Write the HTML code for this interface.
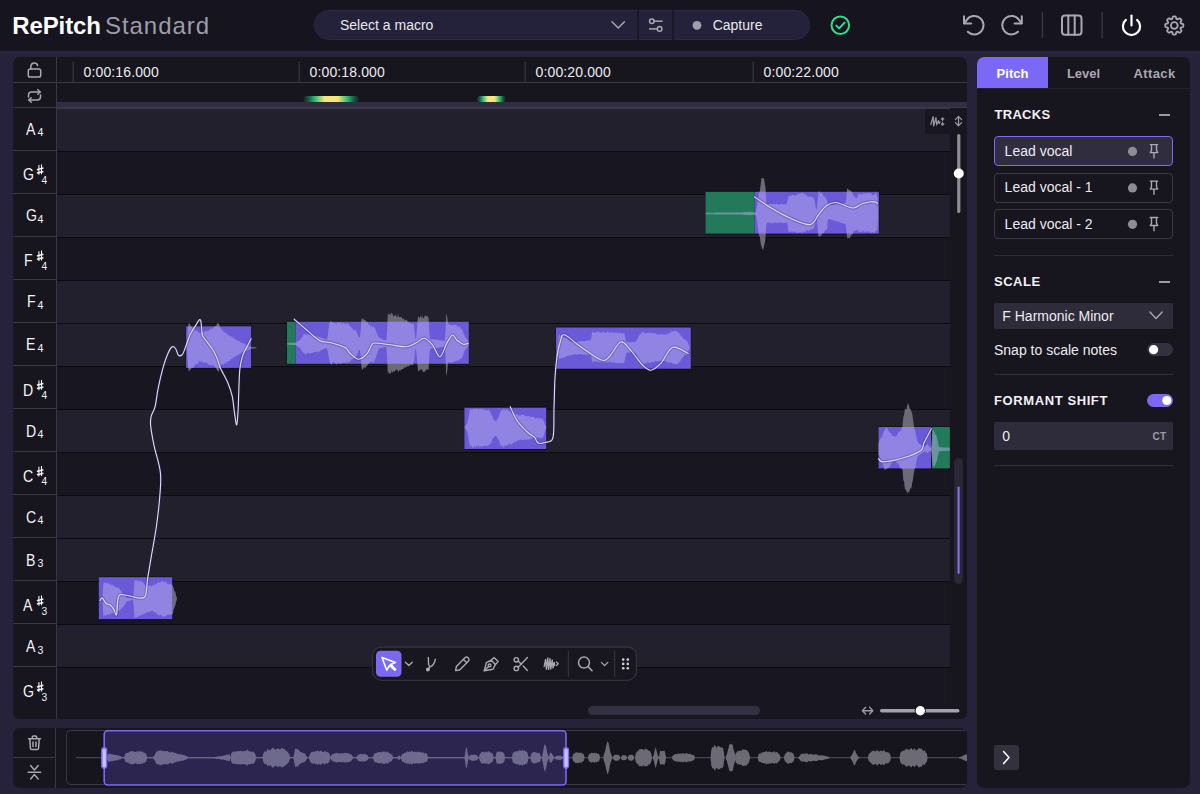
<!DOCTYPE html><html><head><meta charset="utf-8"><style>
html,body{margin:0;padding:0;}
body{width:1200px;height:794px;overflow:hidden;position:relative;background:#252239;font-family:'Liberation Sans', sans-serif;}
div{box-sizing:border-box;}
svg{position:absolute;left:0;top:0;overflow:visible;}
</style></head><body>
<div style="position:absolute;left:0px;top:0px;width:1200px;height:51px;background:#16141e;"></div>
<div style="position:absolute;left:0px;top:51px;width:1200px;height:1.5px;background:#28253d;"></div>
<div style="position:absolute;left:12.3px;top:14.20px;font-size:24px;line-height:1;font-weight:700;color:#ffffff;letter-spacing:-0.12px;white-space:nowrap;">RePitch</div>
<div style="position:absolute;left:105px;top:14.20px;font-size:24px;line-height:1;font-weight:400;color:#9e9ca6;letter-spacing:0.95px;white-space:nowrap;">Standard</div>
<div style="position:absolute;left:314px;top:10px;width:323px;height:30px;background:#24213a;border-radius:15px 0 0 15px;border:1px solid #2c2942;border-right:none;"></div>
<div style="position:absolute;left:639px;top:10px;width:33px;height:30px;background:#24213a;border-top:1px solid #2c2942;border-bottom:1px solid #2c2942;"></div>
<div style="position:absolute;left:674px;top:10px;width:136px;height:30px;background:#24213a;border-radius:0 15px 15px 0;border:1px solid #2c2942;border-left:none;"></div>
<div style="position:absolute;left:637px;top:10px;width:2px;height:30px;background:#1a1826;"></div>
<div style="position:absolute;left:672px;top:10px;width:2px;height:30px;background:#1a1826;"></div>
<div style="position:absolute;left:340px;top:17.70px;font-size:14px;line-height:1;font-weight:400;color:#e8e7ec;letter-spacing:0px;white-space:nowrap;">Select a macro</div>
<div style="position:absolute;left:712.7px;top:17.70px;font-size:14px;line-height:1;font-weight:400;color:#e8e7ec;letter-spacing:0px;white-space:nowrap;">Capture</div>
<div style="position:absolute;left:13px;top:57px;width:954px;height:662px;background:#17151e;border-radius:7px;overflow:hidden;"></div>
<div style="position:absolute;left:977px;top:57px;width:213px;height:731px;background:#17151e;border-radius:7px;"></div>
<div style="position:absolute;left:13px;top:728px;width:954px;height:60px;background:#17151e;border-radius:7px;"></div>
<svg width="1200" height="794" viewBox="0 0 1200 794"><clipPath id="mainclip"><rect x="13" y="57" width="954" height="662" rx="7"/></clipPath><g clip-path="url(#mainclip)"><rect x="57" y="102" width="910" height="5" fill="#312d42"/><rect x="57" y="107" width="910" height="2" fill="#3b3947"/><rect x="13" y="82" width="954" height="1" fill="#3a3845"/><rect x="13" y="107" width="43" height="1" fill="#3a3845"/><rect x="57" y="109.00" width="893" height="42.50" fill="#22202c"/><rect x="57" y="151.50" width="893" height="43.00" fill="#181621"/><rect x="57" y="151.00" width="893" height="1" fill="#0b0a0e"/><rect x="13" y="150" width="43" height="1" fill="#3a3845"/><rect x="57" y="194.50" width="893" height="43.00" fill="#22202c"/><rect x="57" y="194.00" width="893" height="1" fill="#0b0a0e"/><rect x="13" y="193" width="43" height="1" fill="#3a3845"/><rect x="57" y="237.50" width="893" height="43.00" fill="#181621"/><rect x="57" y="237.00" width="893" height="1" fill="#0b0a0e"/><rect x="13" y="236" width="43" height="1" fill="#3a3845"/><rect x="57" y="280.50" width="893" height="43.00" fill="#22202c"/><rect x="57" y="280.00" width="893" height="1" fill="#0b0a0e"/><rect x="13" y="279" width="43" height="1" fill="#3a3845"/><rect x="57" y="323.50" width="893" height="43.00" fill="#22202c"/><rect x="57" y="323.00" width="893" height="1" fill="#0b0a0e"/><rect x="13" y="322" width="43" height="1" fill="#3a3845"/><rect x="57" y="366.50" width="893" height="43.00" fill="#181621"/><rect x="57" y="366.00" width="893" height="1" fill="#0b0a0e"/><rect x="13" y="365" width="43" height="1" fill="#3a3845"/><rect x="57" y="409.50" width="893" height="43.00" fill="#22202c"/><rect x="57" y="409.00" width="893" height="1" fill="#0b0a0e"/><rect x="13" y="408" width="43" height="1" fill="#3a3845"/><rect x="57" y="452.50" width="893" height="43.00" fill="#181621"/><rect x="57" y="452.00" width="893" height="1" fill="#0b0a0e"/><rect x="13" y="451" width="43" height="1" fill="#3a3845"/><rect x="57" y="495.50" width="893" height="43.00" fill="#22202c"/><rect x="57" y="495.00" width="893" height="1" fill="#0b0a0e"/><rect x="13" y="494" width="43" height="1" fill="#3a3845"/><rect x="57" y="538.50" width="893" height="43.00" fill="#22202c"/><rect x="57" y="538.00" width="893" height="1" fill="#0b0a0e"/><rect x="13" y="537" width="43" height="1" fill="#3a3845"/><rect x="57" y="581.50" width="893" height="43.00" fill="#181621"/><rect x="57" y="581.00" width="893" height="1" fill="#0b0a0e"/><rect x="13" y="580" width="43" height="1" fill="#3a3845"/><rect x="57" y="624.50" width="893" height="43.00" fill="#22202c"/><rect x="57" y="624.00" width="893" height="1" fill="#0b0a0e"/><rect x="13" y="623" width="43" height="1" fill="#3a3845"/><rect x="57" y="667.50" width="893" height="51.50" fill="#181621"/><rect x="57" y="667.00" width="893" height="1" fill="#0b0a0e"/><rect x="13" y="666" width="43" height="1" fill="#3a3845"/><rect x="56" y="57" width="1" height="662" fill="#3a3845"/><rect x="950" y="108" width="17" height="611" fill="#17151e"/><rect x="72.70" y="61.5" width="1" height="21" fill="#3f3d49"/><rect x="298.70" y="61.5" width="1" height="21" fill="#3f3d49"/><rect x="524.70" y="61.5" width="1" height="21" fill="#3f3d49"/><rect x="752.70" y="61.5" width="1" height="21" fill="#3f3d49"/><defs>
<linearGradient id="mk" x1="0" x2="1" y1="0" y2="0">
<stop offset="0" stop-color="#1f6b4a" stop-opacity="0.2"/>
<stop offset="0.2" stop-color="#26b873"/>
<stop offset="0.38" stop-color="#f4e77a"/>
<stop offset="0.62" stop-color="#f4e77a"/>
<stop offset="0.8" stop-color="#26b873"/>
<stop offset="1" stop-color="#1f6b4a" stop-opacity="0.2"/>
</linearGradient>
<linearGradient id="mkv" x1="0" x2="0" y1="0" y2="1">
<stop offset="0" stop-color="#000" stop-opacity="0.35"/>
<stop offset="0.5" stop-color="#000" stop-opacity="0"/>
<stop offset="1" stop-color="#000" stop-opacity="0.35"/>
</linearGradient>
</defs><rect x="303.4" y="96" width="55.6" height="6" rx="3" fill="url(#mk)"/><rect x="476.9" y="96" width="28.7" height="6" rx="3" fill="url(#mk)"/><clipPath id="nc0"><rect x="98.8" y="577.2" width="73.40" height="41.90"/></clipPath><rect x="98.3" y="576.2" width="74.40" height="43.90" fill="#0d0b12" opacity="0.6"/><polygon points="102.5,598.8 103.3,583.9 104.1,582.5 104.9,582.9 105.7,582.5 106.5,583.8 107.3,582.5 108.1,582.9 108.9,583.8 109.7,584.5 110.5,583.5 111.3,585.4 112.1,583.9 112.9,585.5 113.7,586.1 114.5,585.9 115.3,586.7 116.1,587.2 116.9,587.6 117.7,587.3 118.5,588.1 119.3,588.2 120.1,589.9 120.9,590.5 121.7,591.7 122.5,593.2 123.3,594.4 124.1,594.9 124.9,595.8 125.7,596.6 126.5,597.4 127.3,597.9 128.1,598.0 128.9,598.0 129.7,598.1 130.5,598.1 131.3,598.2 132.1,598.2 132.9,598.3 133.7,592.7 134.5,579.4 135.3,581.0 136.1,579.9 136.9,580.8 137.7,580.7 138.5,580.8 139.3,581.0 140.1,582.2 140.9,580.1 141.7,581.7 142.5,582.1 143.3,582.4 144.1,583.2 144.9,584.9 145.7,585.7 146.5,587.0 147.3,585.8 148.1,585.9 148.9,585.6 149.7,585.6 150.5,585.9 151.3,586.6 152.1,585.5 152.9,585.2 153.7,585.2 154.5,584.5 155.3,583.9 156.1,584.7 156.9,584.1 157.7,582.3 158.5,582.1 159.3,582.9 160.1,581.6 160.9,582.7 161.7,580.7 162.5,581.8 163.3,581.0 164.1,581.9 164.9,582.3 165.7,581.5 166.5,582.8 167.3,583.9 168.1,583.5 168.9,584.5 169.7,584.0 170.5,583.6 171.3,584.7 172.1,584.4 172.9,586.1 173.7,588.5 174.5,591.2 175.3,591.8 176.1,595.5 176.9,598.3 177.3,598.8 177.3,598.8 176.9,599.3 176.1,602.3 175.3,605.5 174.5,607.2 173.7,609.2 172.9,613.1 172.1,615.3 171.3,613.7 170.5,615.3 169.7,613.9 168.9,615.5 168.1,614.3 167.3,615.1 166.5,615.6 165.7,615.9 164.9,615.8 164.1,616.7 163.3,615.9 162.5,616.9 161.7,615.6 160.9,614.7 160.1,614.5 159.3,615.7 158.5,615.2 157.7,614.7 156.9,613.8 156.1,612.7 155.3,612.7 154.5,612.6 153.7,611.7 152.9,611.5 152.1,610.6 151.3,611.6 150.5,611.2 149.7,611.6 148.9,612.3 148.1,612.7 147.3,611.5 146.5,612.7 145.7,613.0 144.9,614.3 144.1,613.3 143.3,614.3 142.5,615.6 141.7,614.3 140.9,615.5 140.1,616.1 139.3,614.9 138.5,616.0 137.7,617.3 136.9,616.8 136.1,617.7 135.3,617.7 134.5,617.7 133.7,605.5 132.9,599.8 132.1,600.0 131.3,600.2 130.5,600.4 129.7,600.7 128.9,600.9 128.1,601.1 127.3,601.3 126.5,602.1 125.7,603.2 124.9,604.3 124.1,605.7 123.3,606.6 122.5,607.8 121.7,608.3 120.9,609.5 120.1,609.8 119.3,611.0 118.5,610.3 117.7,611.2 116.9,610.6 116.1,611.7 115.3,611.6 114.5,612.4 113.7,612.2 112.9,612.9 112.1,613.1 111.3,613.7 110.5,613.0 109.7,615.2 108.9,615.0 108.1,613.8 107.3,615.1 106.5,614.5 105.7,616.4 104.9,615.5 104.1,614.9 103.3,616.1 102.5,598.8" fill="#6c6a77"/><rect x="98.8" y="577.2" width="73.40" height="41.90" fill="#6a5ad8"/><polygon points="102.5,598.8 103.3,583.9 104.1,582.5 104.9,582.9 105.7,582.5 106.5,583.8 107.3,582.5 108.1,582.9 108.9,583.8 109.7,584.5 110.5,583.5 111.3,585.4 112.1,583.9 112.9,585.5 113.7,586.1 114.5,585.9 115.3,586.7 116.1,587.2 116.9,587.6 117.7,587.3 118.5,588.1 119.3,588.2 120.1,589.9 120.9,590.5 121.7,591.7 122.5,593.2 123.3,594.4 124.1,594.9 124.9,595.8 125.7,596.6 126.5,597.4 127.3,597.9 128.1,598.0 128.9,598.0 129.7,598.1 130.5,598.1 131.3,598.2 132.1,598.2 132.9,598.3 133.7,592.7 134.5,579.4 135.3,581.0 136.1,579.9 136.9,580.8 137.7,580.7 138.5,580.8 139.3,581.0 140.1,582.2 140.9,580.1 141.7,581.7 142.5,582.1 143.3,582.4 144.1,583.2 144.9,584.9 145.7,585.7 146.5,587.0 147.3,585.8 148.1,585.9 148.9,585.6 149.7,585.6 150.5,585.9 151.3,586.6 152.1,585.5 152.9,585.2 153.7,585.2 154.5,584.5 155.3,583.9 156.1,584.7 156.9,584.1 157.7,582.3 158.5,582.1 159.3,582.9 160.1,581.6 160.9,582.7 161.7,580.7 162.5,581.8 163.3,581.0 164.1,581.9 164.9,582.3 165.7,581.5 166.5,582.8 167.3,583.9 168.1,583.5 168.9,584.5 169.7,584.0 170.5,583.6 171.3,584.7 172.1,584.4 172.9,586.1 173.7,588.5 174.5,591.2 175.3,591.8 176.1,595.5 176.9,598.3 177.3,598.8 177.3,598.8 176.9,599.3 176.1,602.3 175.3,605.5 174.5,607.2 173.7,609.2 172.9,613.1 172.1,615.3 171.3,613.7 170.5,615.3 169.7,613.9 168.9,615.5 168.1,614.3 167.3,615.1 166.5,615.6 165.7,615.9 164.9,615.8 164.1,616.7 163.3,615.9 162.5,616.9 161.7,615.6 160.9,614.7 160.1,614.5 159.3,615.7 158.5,615.2 157.7,614.7 156.9,613.8 156.1,612.7 155.3,612.7 154.5,612.6 153.7,611.7 152.9,611.5 152.1,610.6 151.3,611.6 150.5,611.2 149.7,611.6 148.9,612.3 148.1,612.7 147.3,611.5 146.5,612.7 145.7,613.0 144.9,614.3 144.1,613.3 143.3,614.3 142.5,615.6 141.7,614.3 140.9,615.5 140.1,616.1 139.3,614.9 138.5,616.0 137.7,617.3 136.9,616.8 136.1,617.7 135.3,617.7 134.5,617.7 133.7,605.5 132.9,599.8 132.1,600.0 131.3,600.2 130.5,600.4 129.7,600.7 128.9,600.9 128.1,601.1 127.3,601.3 126.5,602.1 125.7,603.2 124.9,604.3 124.1,605.7 123.3,606.6 122.5,607.8 121.7,608.3 120.9,609.5 120.1,609.8 119.3,611.0 118.5,610.3 117.7,611.2 116.9,610.6 116.1,611.7 115.3,611.6 114.5,612.4 113.7,612.2 112.9,612.9 112.1,613.1 111.3,613.7 110.5,613.0 109.7,615.2 108.9,615.0 108.1,613.8 107.3,615.1 106.5,614.5 105.7,616.4 104.9,615.5 104.1,614.9 103.3,616.1 102.5,598.8" fill="rgba(190,182,240,0.45)" clip-path="url(#nc0)"/><clipPath id="nc1"><rect x="186.1" y="326.3" width="65.00" height="41.60"/></clipPath><rect x="185.6" y="325.3" width="66.00" height="43.60" fill="#0d0b12" opacity="0.6"/><polygon points="186.8,347.8 187.6,334.4 188.4,324.0 189.2,322.7 190.0,324.4 190.8,325.9 191.6,327.0 192.4,328.0 193.2,327.7 194.0,327.7 194.8,329.5 195.6,331.0 196.4,330.5 197.2,331.2 198.0,331.4 198.8,332.5 199.6,332.9 200.4,333.0 201.2,332.5 202.0,331.8 202.8,331.9 203.6,331.7 204.4,332.3 205.2,330.8 206.0,331.0 206.8,331.4 207.6,330.9 208.4,330.5 209.2,330.5 210.0,328.8 210.8,329.2 211.6,328.5 212.4,329.3 213.2,327.7 214.0,326.8 214.8,326.4 215.6,325.9 216.4,325.4 217.2,323.3 218.0,323.2 218.8,323.7 219.6,325.6 220.4,327.5 221.2,328.9 222.0,329.8 222.8,330.5 223.6,332.0 224.4,332.7 225.2,331.7 226.0,333.5 226.8,333.6 227.6,334.8 228.4,335.1 229.2,335.7 230.0,336.3 230.8,336.8 231.6,336.1 232.4,337.5 233.2,337.8 234.0,337.5 234.8,339.2 235.6,339.1 236.4,340.1 237.2,340.7 238.0,340.5 238.8,341.0 239.6,341.5 240.4,342.2 241.2,342.5 242.0,343.2 242.8,343.1 243.6,343.6 244.4,344.0 245.2,344.2 246.0,344.7 246.8,345.1 247.6,345.4 248.4,345.8 249.2,346.2 250.0,346.5 250.8,346.9 251.6,347.0 252.4,347.1 253.2,347.1 254.0,347.2 254.8,347.2 255.6,347.3 256.4,347.3 256.4,348.3 255.6,348.3 254.8,348.4 254.0,348.4 253.2,348.5 252.4,348.5 251.6,348.6 250.8,348.7 250.0,349.1 249.2,349.4 248.4,349.8 247.6,350.2 246.8,350.5 246.0,350.8 245.2,351.1 244.4,351.4 243.6,351.9 242.8,352.1 242.0,352.6 241.2,352.9 240.4,353.2 239.6,353.9 238.8,354.5 238.0,355.0 237.2,355.3 236.4,355.7 235.6,356.7 234.8,356.7 234.0,357.0 233.2,357.4 232.4,358.8 231.6,358.5 230.8,359.2 230.0,360.4 229.2,361.4 228.4,361.4 227.6,361.4 226.8,362.6 226.0,363.4 225.2,362.7 224.4,363.8 223.6,365.0 222.8,364.2 222.0,364.3 221.2,365.0 220.4,367.5 219.6,367.6 218.8,371.9 218.0,370.7 217.2,370.7 216.4,368.8 215.6,367.6 214.8,366.2 214.0,365.7 213.2,365.1 212.4,365.1 211.6,365.1 210.8,365.7 210.0,364.2 209.2,364.7 208.4,364.2 207.6,364.0 206.8,362.8 206.0,362.9 205.2,361.6 204.4,363.0 203.6,362.5 202.8,362.5 202.0,362.1 201.2,360.8 200.4,362.1 199.6,361.2 198.8,361.6 198.0,363.3 197.2,364.6 196.4,364.0 195.6,364.0 194.8,365.2 194.0,366.5 193.2,368.3 192.4,367.4 191.6,367.4 190.8,369.4 190.0,369.4 189.2,371.5 188.4,370.3 187.6,360.4 186.8,347.8" fill="#6c6a77"/><rect x="186.1" y="326.3" width="65.00" height="41.60" fill="#6a5ad8"/><polygon points="186.8,347.8 187.6,334.4 188.4,324.0 189.2,322.7 190.0,324.4 190.8,325.9 191.6,327.0 192.4,328.0 193.2,327.7 194.0,327.7 194.8,329.5 195.6,331.0 196.4,330.5 197.2,331.2 198.0,331.4 198.8,332.5 199.6,332.9 200.4,333.0 201.2,332.5 202.0,331.8 202.8,331.9 203.6,331.7 204.4,332.3 205.2,330.8 206.0,331.0 206.8,331.4 207.6,330.9 208.4,330.5 209.2,330.5 210.0,328.8 210.8,329.2 211.6,328.5 212.4,329.3 213.2,327.7 214.0,326.8 214.8,326.4 215.6,325.9 216.4,325.4 217.2,323.3 218.0,323.2 218.8,323.7 219.6,325.6 220.4,327.5 221.2,328.9 222.0,329.8 222.8,330.5 223.6,332.0 224.4,332.7 225.2,331.7 226.0,333.5 226.8,333.6 227.6,334.8 228.4,335.1 229.2,335.7 230.0,336.3 230.8,336.8 231.6,336.1 232.4,337.5 233.2,337.8 234.0,337.5 234.8,339.2 235.6,339.1 236.4,340.1 237.2,340.7 238.0,340.5 238.8,341.0 239.6,341.5 240.4,342.2 241.2,342.5 242.0,343.2 242.8,343.1 243.6,343.6 244.4,344.0 245.2,344.2 246.0,344.7 246.8,345.1 247.6,345.4 248.4,345.8 249.2,346.2 250.0,346.5 250.8,346.9 251.6,347.0 252.4,347.1 253.2,347.1 254.0,347.2 254.8,347.2 255.6,347.3 256.4,347.3 256.4,348.3 255.6,348.3 254.8,348.4 254.0,348.4 253.2,348.5 252.4,348.5 251.6,348.6 250.8,348.7 250.0,349.1 249.2,349.4 248.4,349.8 247.6,350.2 246.8,350.5 246.0,350.8 245.2,351.1 244.4,351.4 243.6,351.9 242.8,352.1 242.0,352.6 241.2,352.9 240.4,353.2 239.6,353.9 238.8,354.5 238.0,355.0 237.2,355.3 236.4,355.7 235.6,356.7 234.8,356.7 234.0,357.0 233.2,357.4 232.4,358.8 231.6,358.5 230.8,359.2 230.0,360.4 229.2,361.4 228.4,361.4 227.6,361.4 226.8,362.6 226.0,363.4 225.2,362.7 224.4,363.8 223.6,365.0 222.8,364.2 222.0,364.3 221.2,365.0 220.4,367.5 219.6,367.6 218.8,371.9 218.0,370.7 217.2,370.7 216.4,368.8 215.6,367.6 214.8,366.2 214.0,365.7 213.2,365.1 212.4,365.1 211.6,365.1 210.8,365.7 210.0,364.2 209.2,364.7 208.4,364.2 207.6,364.0 206.8,362.8 206.0,362.9 205.2,361.6 204.4,363.0 203.6,362.5 202.8,362.5 202.0,362.1 201.2,360.8 200.4,362.1 199.6,361.2 198.8,361.6 198.0,363.3 197.2,364.6 196.4,364.0 195.6,364.0 194.8,365.2 194.0,366.5 193.2,368.3 192.4,367.4 191.6,367.4 190.8,369.4 190.0,369.4 189.2,371.5 188.4,370.3 187.6,360.4 186.8,347.8" fill="rgba(190,182,240,0.45)" clip-path="url(#nc1)"/><clipPath id="nc2"><rect x="287" y="321.7" width="8.80" height="42.10"/><rect x="295.8" y="321.7" width="173.00" height="42.10"/></clipPath><rect x="286.5" y="320.7" width="9.80" height="44.10" fill="#0d0b12" opacity="0.6"/><rect x="295.3" y="320.7" width="174.00" height="44.10" fill="#0d0b12" opacity="0.6"/><polygon points="287.0,343.3 287.8,343.1 288.6,342.9 289.4,342.8 290.2,342.8 291.0,342.7 291.8,342.7 292.6,342.7 293.4,342.7 294.2,342.6 295.0,342.6 295.8,342.6 296.6,342.0 297.4,341.4 298.2,340.9 299.0,340.8 299.8,340.1 300.6,339.0 301.4,338.3 302.2,337.0 303.0,335.1 303.8,334.4 304.6,334.1 305.4,334.2 306.2,334.4 307.0,334.4 307.8,334.5 308.6,335.1 309.4,334.6 310.2,335.0 311.0,335.1 311.8,335.6 312.6,335.7 313.4,335.4 314.2,336.3 315.0,335.6 315.8,336.1 316.6,336.4 317.4,336.7 318.2,336.6 319.0,336.8 319.8,337.0 320.6,337.4 321.4,337.6 322.2,337.9 323.0,338.3 323.8,338.6 324.6,339.2 325.4,339.2 326.2,339.9 327.0,339.5 327.8,335.5 328.6,328.3 329.4,323.4 330.2,321.5 331.0,321.1 331.8,322.3 332.6,322.9 333.4,322.1 334.2,323.4 335.0,322.3 335.8,323.9 336.6,323.2 337.4,321.7 338.2,323.0 339.0,322.5 339.8,322.8 340.6,321.9 341.4,323.3 342.2,323.9 343.0,322.0 343.8,323.2 344.6,323.6 345.4,324.8 346.2,323.2 347.0,323.3 347.8,323.5 348.6,324.0 349.4,326.4 350.2,325.7 351.0,327.6 351.8,327.8 352.6,329.1 353.4,329.8 354.2,330.4 355.0,329.7 355.8,330.6 356.6,332.4 357.4,333.4 358.2,336.0 359.0,336.9 359.8,338.0 360.6,331.9 361.4,319.2 362.2,319.3 363.0,317.7 363.8,320.3 364.6,319.9 365.4,319.8 366.2,322.4 367.0,321.5 367.8,322.4 368.6,325.0 369.4,324.1 370.2,326.0 371.0,326.4 371.8,325.7 372.6,328.1 373.4,326.2 374.2,327.8 375.0,328.0 375.8,330.2 376.6,332.4 377.4,334.8 378.2,336.6 379.0,337.6 379.8,338.1 380.6,338.3 381.4,338.6 382.2,338.9 383.0,339.8 383.8,340.0 384.6,340.0 385.4,340.4 386.2,340.6 387.0,332.7 387.8,313.9 388.6,314.5 389.4,314.0 390.2,315.5 391.0,312.8 391.8,313.3 392.6,314.2 393.4,316.6 394.2,315.9 395.0,315.4 395.8,314.2 396.6,317.1 397.4,316.9 398.2,313.9 399.0,317.4 399.8,316.9 400.6,317.1 401.4,316.7 402.2,318.6 403.0,319.3 403.8,317.9 404.6,320.6 405.4,320.2 406.2,319.5 407.0,320.1 407.8,321.7 408.6,322.0 409.4,322.7 410.2,323.0 411.0,323.1 411.8,324.6 412.6,323.8 413.4,322.5 414.2,327.6 415.0,336.2 415.8,340.1 416.6,333.9 417.4,322.4 418.2,315.5 419.0,317.7 419.8,318.2 420.6,315.5 421.4,318.0 422.2,315.2 423.0,318.4 423.8,318.1 424.6,316.2 425.4,315.3 426.2,315.9 427.0,316.1 427.8,316.4 428.6,318.2 429.4,333.3 430.2,338.9 431.0,339.2 431.8,339.3 432.6,339.1 433.4,339.4 434.2,339.5 435.0,339.8 435.8,339.4 436.6,339.6 437.4,339.7 438.2,339.9 439.0,340.1 439.8,340.0 440.6,340.5 441.4,340.2 442.2,340.5 443.0,340.7 443.8,340.8 444.6,340.9 445.4,334.2 446.2,313.6 447.0,315.8 447.8,321.6 448.6,324.4 449.4,324.0 450.2,325.0 451.0,324.9 451.8,325.5 452.6,324.9 453.4,325.2 454.2,324.6 455.0,325.6 455.8,325.0 456.6,325.5 457.4,326.4 458.2,327.1 459.0,326.4 459.8,326.2 460.6,328.0 461.4,329.0 462.2,329.3 463.0,332.2 463.8,334.1 464.6,335.5 465.4,337.6 466.2,338.4 467.0,338.9 467.8,340.7 468.6,342.0 469.0,342.8 469.0,344.8 468.6,345.4 467.8,346.5 467.0,347.9 466.2,348.3 465.4,349.6 464.6,350.5 463.8,352.7 463.0,355.3 462.2,357.4 461.4,358.7 460.6,358.8 459.8,359.1 459.0,360.8 458.2,360.6 457.4,359.7 456.6,361.6 455.8,360.6 455.0,361.5 454.2,361.4 453.4,362.3 452.6,362.0 451.8,363.2 451.0,362.9 450.2,362.1 449.4,362.4 448.6,361.7 447.8,364.3 447.0,373.2 446.2,375.7 445.4,353.8 444.6,346.7 443.8,346.9 443.0,346.9 442.2,347.2 441.4,347.2 440.6,347.4 439.8,347.3 439.0,347.6 438.2,347.7 437.4,347.9 436.6,347.7 435.8,347.9 435.0,348.1 434.2,348.1 433.4,348.2 432.6,348.3 431.8,348.6 431.0,348.4 430.2,348.9 429.4,354.7 428.6,370.0 427.8,369.1 427.0,370.5 426.2,368.9 425.4,370.9 424.6,371.9 423.8,372.0 423.0,372.0 422.2,369.7 421.4,369.5 420.6,369.4 419.8,369.8 419.0,371.4 418.2,371.3 417.4,364.7 416.6,353.9 415.8,347.9 415.0,351.7 414.2,360.1 413.4,364.1 412.6,365.6 411.8,364.4 411.0,365.4 410.2,364.4 409.4,366.0 408.6,366.4 407.8,365.8 407.0,367.0 406.2,366.7 405.4,367.9 404.6,367.0 403.8,368.2 403.0,369.2 402.2,368.9 401.4,369.4 400.6,370.8 399.8,369.9 399.0,370.8 398.2,372.3 397.4,369.6 396.6,369.9 395.8,369.5 395.0,371.4 394.2,371.7 393.4,370.9 392.6,373.3 391.8,370.2 391.0,373.4 390.2,373.5 389.4,373.7 388.6,371.5 387.8,373.9 387.0,355.5 386.2,346.8 385.4,347.2 384.6,347.2 383.8,347.3 383.0,347.7 382.2,347.8 381.4,348.1 380.6,348.2 379.8,348.0 379.0,348.9 378.2,350.2 377.4,352.4 376.6,355.0 375.8,357.8 375.0,358.7 374.2,361.7 373.4,362.5 372.6,362.4 371.8,360.9 371.0,361.9 370.2,362.5 369.4,362.9 368.6,363.7 367.8,364.6 367.0,366.3 366.2,366.0 365.4,368.5 364.6,367.2 363.8,367.5 363.0,369.0 362.2,369.9 361.4,366.7 360.6,355.2 359.8,349.6 359.0,350.2 358.2,352.1 357.4,353.8 356.6,355.6 355.8,357.9 355.0,357.2 354.2,358.0 353.4,358.7 352.6,358.7 351.8,359.3 351.0,360.3 350.2,362.2 349.4,360.7 348.6,362.9 347.8,362.4 347.0,362.9 346.2,361.9 345.4,363.3 344.6,363.3 343.8,361.8 343.0,363.2 342.2,362.6 341.4,363.7 340.6,363.2 339.8,363.5 339.0,363.5 338.2,363.3 337.4,363.0 336.6,364.5 335.8,364.3 335.0,362.5 334.2,363.1 333.4,362.2 332.6,362.3 331.8,364.7 331.0,364.7 330.2,363.1 329.4,361.0 328.6,356.6 327.8,352.1 327.0,347.9 326.2,348.1 325.4,348.6 324.6,348.4 323.8,349.1 323.0,349.2 322.2,349.8 321.4,350.5 320.6,350.2 319.8,351.3 319.0,351.6 318.2,351.9 317.4,351.7 316.6,351.7 315.8,351.7 315.0,352.0 314.2,351.9 313.4,351.9 312.6,353.0 311.8,353.0 311.0,353.3 310.2,353.4 309.4,353.1 308.6,352.7 307.8,353.5 307.0,353.0 306.2,354.0 305.4,354.4 304.6,353.4 303.8,353.3 303.0,352.4 302.2,351.0 301.4,350.2 300.6,348.4 299.8,347.7 299.0,347.0 298.2,346.7 297.4,346.2 296.6,345.6 295.8,345.0 295.0,345.0 294.2,345.0 293.4,344.9 292.6,344.9 291.8,344.9 291.0,344.9 290.2,344.8 289.4,344.8 288.6,344.7 287.8,344.5 287.0,344.3" fill="#6c6a77"/><rect x="287" y="321.7" width="8.80" height="42.10" fill="#237a5b"/><rect x="295.8" y="321.7" width="173.00" height="42.10" fill="#6a5ad8"/><polygon points="287.0,343.3 287.8,343.1 288.6,342.9 289.4,342.8 290.2,342.8 291.0,342.7 291.8,342.7 292.6,342.7 293.4,342.7 294.2,342.6 295.0,342.6 295.8,342.6 296.6,342.0 297.4,341.4 298.2,340.9 299.0,340.8 299.8,340.1 300.6,339.0 301.4,338.3 302.2,337.0 303.0,335.1 303.8,334.4 304.6,334.1 305.4,334.2 306.2,334.4 307.0,334.4 307.8,334.5 308.6,335.1 309.4,334.6 310.2,335.0 311.0,335.1 311.8,335.6 312.6,335.7 313.4,335.4 314.2,336.3 315.0,335.6 315.8,336.1 316.6,336.4 317.4,336.7 318.2,336.6 319.0,336.8 319.8,337.0 320.6,337.4 321.4,337.6 322.2,337.9 323.0,338.3 323.8,338.6 324.6,339.2 325.4,339.2 326.2,339.9 327.0,339.5 327.8,335.5 328.6,328.3 329.4,323.4 330.2,321.5 331.0,321.1 331.8,322.3 332.6,322.9 333.4,322.1 334.2,323.4 335.0,322.3 335.8,323.9 336.6,323.2 337.4,321.7 338.2,323.0 339.0,322.5 339.8,322.8 340.6,321.9 341.4,323.3 342.2,323.9 343.0,322.0 343.8,323.2 344.6,323.6 345.4,324.8 346.2,323.2 347.0,323.3 347.8,323.5 348.6,324.0 349.4,326.4 350.2,325.7 351.0,327.6 351.8,327.8 352.6,329.1 353.4,329.8 354.2,330.4 355.0,329.7 355.8,330.6 356.6,332.4 357.4,333.4 358.2,336.0 359.0,336.9 359.8,338.0 360.6,331.9 361.4,319.2 362.2,319.3 363.0,317.7 363.8,320.3 364.6,319.9 365.4,319.8 366.2,322.4 367.0,321.5 367.8,322.4 368.6,325.0 369.4,324.1 370.2,326.0 371.0,326.4 371.8,325.7 372.6,328.1 373.4,326.2 374.2,327.8 375.0,328.0 375.8,330.2 376.6,332.4 377.4,334.8 378.2,336.6 379.0,337.6 379.8,338.1 380.6,338.3 381.4,338.6 382.2,338.9 383.0,339.8 383.8,340.0 384.6,340.0 385.4,340.4 386.2,340.6 387.0,332.7 387.8,313.9 388.6,314.5 389.4,314.0 390.2,315.5 391.0,312.8 391.8,313.3 392.6,314.2 393.4,316.6 394.2,315.9 395.0,315.4 395.8,314.2 396.6,317.1 397.4,316.9 398.2,313.9 399.0,317.4 399.8,316.9 400.6,317.1 401.4,316.7 402.2,318.6 403.0,319.3 403.8,317.9 404.6,320.6 405.4,320.2 406.2,319.5 407.0,320.1 407.8,321.7 408.6,322.0 409.4,322.7 410.2,323.0 411.0,323.1 411.8,324.6 412.6,323.8 413.4,322.5 414.2,327.6 415.0,336.2 415.8,340.1 416.6,333.9 417.4,322.4 418.2,315.5 419.0,317.7 419.8,318.2 420.6,315.5 421.4,318.0 422.2,315.2 423.0,318.4 423.8,318.1 424.6,316.2 425.4,315.3 426.2,315.9 427.0,316.1 427.8,316.4 428.6,318.2 429.4,333.3 430.2,338.9 431.0,339.2 431.8,339.3 432.6,339.1 433.4,339.4 434.2,339.5 435.0,339.8 435.8,339.4 436.6,339.6 437.4,339.7 438.2,339.9 439.0,340.1 439.8,340.0 440.6,340.5 441.4,340.2 442.2,340.5 443.0,340.7 443.8,340.8 444.6,340.9 445.4,334.2 446.2,313.6 447.0,315.8 447.8,321.6 448.6,324.4 449.4,324.0 450.2,325.0 451.0,324.9 451.8,325.5 452.6,324.9 453.4,325.2 454.2,324.6 455.0,325.6 455.8,325.0 456.6,325.5 457.4,326.4 458.2,327.1 459.0,326.4 459.8,326.2 460.6,328.0 461.4,329.0 462.2,329.3 463.0,332.2 463.8,334.1 464.6,335.5 465.4,337.6 466.2,338.4 467.0,338.9 467.8,340.7 468.6,342.0 469.0,342.8 469.0,344.8 468.6,345.4 467.8,346.5 467.0,347.9 466.2,348.3 465.4,349.6 464.6,350.5 463.8,352.7 463.0,355.3 462.2,357.4 461.4,358.7 460.6,358.8 459.8,359.1 459.0,360.8 458.2,360.6 457.4,359.7 456.6,361.6 455.8,360.6 455.0,361.5 454.2,361.4 453.4,362.3 452.6,362.0 451.8,363.2 451.0,362.9 450.2,362.1 449.4,362.4 448.6,361.7 447.8,364.3 447.0,373.2 446.2,375.7 445.4,353.8 444.6,346.7 443.8,346.9 443.0,346.9 442.2,347.2 441.4,347.2 440.6,347.4 439.8,347.3 439.0,347.6 438.2,347.7 437.4,347.9 436.6,347.7 435.8,347.9 435.0,348.1 434.2,348.1 433.4,348.2 432.6,348.3 431.8,348.6 431.0,348.4 430.2,348.9 429.4,354.7 428.6,370.0 427.8,369.1 427.0,370.5 426.2,368.9 425.4,370.9 424.6,371.9 423.8,372.0 423.0,372.0 422.2,369.7 421.4,369.5 420.6,369.4 419.8,369.8 419.0,371.4 418.2,371.3 417.4,364.7 416.6,353.9 415.8,347.9 415.0,351.7 414.2,360.1 413.4,364.1 412.6,365.6 411.8,364.4 411.0,365.4 410.2,364.4 409.4,366.0 408.6,366.4 407.8,365.8 407.0,367.0 406.2,366.7 405.4,367.9 404.6,367.0 403.8,368.2 403.0,369.2 402.2,368.9 401.4,369.4 400.6,370.8 399.8,369.9 399.0,370.8 398.2,372.3 397.4,369.6 396.6,369.9 395.8,369.5 395.0,371.4 394.2,371.7 393.4,370.9 392.6,373.3 391.8,370.2 391.0,373.4 390.2,373.5 389.4,373.7 388.6,371.5 387.8,373.9 387.0,355.5 386.2,346.8 385.4,347.2 384.6,347.2 383.8,347.3 383.0,347.7 382.2,347.8 381.4,348.1 380.6,348.2 379.8,348.0 379.0,348.9 378.2,350.2 377.4,352.4 376.6,355.0 375.8,357.8 375.0,358.7 374.2,361.7 373.4,362.5 372.6,362.4 371.8,360.9 371.0,361.9 370.2,362.5 369.4,362.9 368.6,363.7 367.8,364.6 367.0,366.3 366.2,366.0 365.4,368.5 364.6,367.2 363.8,367.5 363.0,369.0 362.2,369.9 361.4,366.7 360.6,355.2 359.8,349.6 359.0,350.2 358.2,352.1 357.4,353.8 356.6,355.6 355.8,357.9 355.0,357.2 354.2,358.0 353.4,358.7 352.6,358.7 351.8,359.3 351.0,360.3 350.2,362.2 349.4,360.7 348.6,362.9 347.8,362.4 347.0,362.9 346.2,361.9 345.4,363.3 344.6,363.3 343.8,361.8 343.0,363.2 342.2,362.6 341.4,363.7 340.6,363.2 339.8,363.5 339.0,363.5 338.2,363.3 337.4,363.0 336.6,364.5 335.8,364.3 335.0,362.5 334.2,363.1 333.4,362.2 332.6,362.3 331.8,364.7 331.0,364.7 330.2,363.1 329.4,361.0 328.6,356.6 327.8,352.1 327.0,347.9 326.2,348.1 325.4,348.6 324.6,348.4 323.8,349.1 323.0,349.2 322.2,349.8 321.4,350.5 320.6,350.2 319.8,351.3 319.0,351.6 318.2,351.9 317.4,351.7 316.6,351.7 315.8,351.7 315.0,352.0 314.2,351.9 313.4,351.9 312.6,353.0 311.8,353.0 311.0,353.3 310.2,353.4 309.4,353.1 308.6,352.7 307.8,353.5 307.0,353.0 306.2,354.0 305.4,354.4 304.6,353.4 303.8,353.3 303.0,352.4 302.2,351.0 301.4,350.2 300.6,348.4 299.8,347.7 299.0,347.0 298.2,346.7 297.4,346.2 296.6,345.6 295.8,345.0 295.0,345.0 294.2,345.0 293.4,344.9 292.6,344.9 291.8,344.9 291.0,344.9 290.2,344.8 289.4,344.8 288.6,344.7 287.8,344.5 287.0,344.3" fill="rgba(190,182,240,0.45)" clip-path="url(#nc2)"/><clipPath id="nc3"><rect x="464.4" y="407.7" width="81.85" height="41.30"/></clipPath><rect x="463.9" y="406.7" width="82.85" height="43.30" fill="#0d0b12" opacity="0.6"/><polygon points="464.6,427.5 465.4,426.2 466.2,425.0 467.0,424.0 467.8,420.9 468.6,417.1 469.4,411.4 470.2,408.8 471.0,409.0 471.8,409.9 472.6,409.8 473.4,408.4 474.2,408.5 475.0,409.7 475.8,408.8 476.6,408.5 477.4,409.2 478.2,409.5 479.0,409.6 479.8,408.5 480.6,409.5 481.4,408.7 482.2,408.8 483.0,409.7 483.8,409.6 484.6,410.6 485.4,409.2 486.2,411.0 487.0,410.5 487.8,410.1 488.6,409.0 489.4,410.9 490.2,411.7 491.0,413.8 491.8,415.6 492.6,416.6 493.4,419.4 494.2,420.0 495.0,421.3 495.8,421.6 496.6,421.1 497.4,419.0 498.2,417.5 499.0,416.6 499.8,413.0 500.6,412.1 501.4,410.1 502.2,409.8 503.0,409.2 503.8,409.4 504.6,409.6 505.4,410.4 506.2,408.9 507.0,410.3 507.8,409.0 508.6,411.0 509.4,411.7 510.2,410.7 511.0,412.4 511.8,412.4 512.6,413.0 513.4,412.1 514.2,412.1 515.0,413.9 515.8,414.6 516.6,414.5 517.4,413.8 518.2,415.4 519.0,415.3 519.8,415.5 520.6,415.7 521.4,414.5 522.2,414.5 523.0,414.8 523.8,415.1 524.6,415.8 525.4,416.4 526.2,415.5 527.0,416.5 527.8,416.0 528.6,416.1 529.4,416.5 530.2,417.2 531.0,416.4 531.8,416.6 532.6,417.1 533.4,417.0 534.2,417.1 535.0,418.4 535.8,417.8 536.6,417.8 537.4,418.7 538.2,418.0 539.0,418.2 539.8,418.4 540.6,418.5 541.4,418.7 542.2,419.1 543.0,419.2 543.8,421.2 544.6,423.7 545.4,425.6 546.2,427.2 546.7,427.5 546.7,427.5 546.2,427.9 545.4,429.9 544.6,432.3 543.8,435.4 543.0,437.7 542.2,437.5 541.4,437.4 540.6,438.0 539.8,438.4 539.0,437.6 538.2,437.5 537.4,437.5 536.6,438.9 535.8,438.5 535.0,438.0 534.2,438.8 533.4,438.1 532.6,438.1 531.8,439.5 531.0,438.2 530.2,439.6 529.4,439.3 528.6,439.2 527.8,439.4 527.0,439.5 526.2,440.0 525.4,440.0 524.6,438.9 523.8,440.0 523.0,439.9 522.2,439.6 521.4,439.9 520.6,439.2 519.8,440.6 519.0,439.7 518.2,440.0 517.4,440.8 516.6,441.8 515.8,441.3 515.0,441.7 514.2,442.3 513.4,442.6 512.6,443.3 511.8,444.8 511.0,444.1 510.2,443.8 509.4,444.3 508.6,444.4 507.8,445.6 507.0,445.1 506.2,446.1 505.4,445.8 504.6,445.6 503.8,448.1 503.0,446.1 502.2,445.9 501.4,446.5 500.6,445.3 499.8,443.2 499.0,440.4 498.2,439.7 497.4,438.0 496.6,436.5 495.8,435.7 495.0,435.7 494.2,436.8 493.4,437.5 492.6,438.8 491.8,441.2 491.0,443.3 490.2,443.7 489.4,444.6 488.6,445.2 487.8,445.6 487.0,446.1 486.2,446.4 485.4,445.0 484.6,445.7 483.8,446.1 483.0,446.1 482.2,447.2 481.4,446.6 480.6,445.9 479.8,447.4 479.0,445.5 478.2,445.7 477.4,447.0 476.6,445.6 475.8,447.6 475.0,447.1 474.2,446.0 473.4,447.6 472.6,448.0 471.8,445.9 471.0,446.4 470.2,445.9 469.4,444.2 468.6,438.9 467.8,434.1 467.0,430.9 466.2,430.0 465.4,428.8 464.6,427.5" fill="#6c6a77"/><rect x="464.4" y="407.7" width="81.85" height="41.30" fill="#6a5ad8"/><polygon points="464.6,427.5 465.4,426.2 466.2,425.0 467.0,424.0 467.8,420.9 468.6,417.1 469.4,411.4 470.2,408.8 471.0,409.0 471.8,409.9 472.6,409.8 473.4,408.4 474.2,408.5 475.0,409.7 475.8,408.8 476.6,408.5 477.4,409.2 478.2,409.5 479.0,409.6 479.8,408.5 480.6,409.5 481.4,408.7 482.2,408.8 483.0,409.7 483.8,409.6 484.6,410.6 485.4,409.2 486.2,411.0 487.0,410.5 487.8,410.1 488.6,409.0 489.4,410.9 490.2,411.7 491.0,413.8 491.8,415.6 492.6,416.6 493.4,419.4 494.2,420.0 495.0,421.3 495.8,421.6 496.6,421.1 497.4,419.0 498.2,417.5 499.0,416.6 499.8,413.0 500.6,412.1 501.4,410.1 502.2,409.8 503.0,409.2 503.8,409.4 504.6,409.6 505.4,410.4 506.2,408.9 507.0,410.3 507.8,409.0 508.6,411.0 509.4,411.7 510.2,410.7 511.0,412.4 511.8,412.4 512.6,413.0 513.4,412.1 514.2,412.1 515.0,413.9 515.8,414.6 516.6,414.5 517.4,413.8 518.2,415.4 519.0,415.3 519.8,415.5 520.6,415.7 521.4,414.5 522.2,414.5 523.0,414.8 523.8,415.1 524.6,415.8 525.4,416.4 526.2,415.5 527.0,416.5 527.8,416.0 528.6,416.1 529.4,416.5 530.2,417.2 531.0,416.4 531.8,416.6 532.6,417.1 533.4,417.0 534.2,417.1 535.0,418.4 535.8,417.8 536.6,417.8 537.4,418.7 538.2,418.0 539.0,418.2 539.8,418.4 540.6,418.5 541.4,418.7 542.2,419.1 543.0,419.2 543.8,421.2 544.6,423.7 545.4,425.6 546.2,427.2 546.7,427.5 546.7,427.5 546.2,427.9 545.4,429.9 544.6,432.3 543.8,435.4 543.0,437.7 542.2,437.5 541.4,437.4 540.6,438.0 539.8,438.4 539.0,437.6 538.2,437.5 537.4,437.5 536.6,438.9 535.8,438.5 535.0,438.0 534.2,438.8 533.4,438.1 532.6,438.1 531.8,439.5 531.0,438.2 530.2,439.6 529.4,439.3 528.6,439.2 527.8,439.4 527.0,439.5 526.2,440.0 525.4,440.0 524.6,438.9 523.8,440.0 523.0,439.9 522.2,439.6 521.4,439.9 520.6,439.2 519.8,440.6 519.0,439.7 518.2,440.0 517.4,440.8 516.6,441.8 515.8,441.3 515.0,441.7 514.2,442.3 513.4,442.6 512.6,443.3 511.8,444.8 511.0,444.1 510.2,443.8 509.4,444.3 508.6,444.4 507.8,445.6 507.0,445.1 506.2,446.1 505.4,445.8 504.6,445.6 503.8,448.1 503.0,446.1 502.2,445.9 501.4,446.5 500.6,445.3 499.8,443.2 499.0,440.4 498.2,439.7 497.4,438.0 496.6,436.5 495.8,435.7 495.0,435.7 494.2,436.8 493.4,437.5 492.6,438.8 491.8,441.2 491.0,443.3 490.2,443.7 489.4,444.6 488.6,445.2 487.8,445.6 487.0,446.1 486.2,446.4 485.4,445.0 484.6,445.7 483.8,446.1 483.0,446.1 482.2,447.2 481.4,446.6 480.6,445.9 479.8,447.4 479.0,445.5 478.2,445.7 477.4,447.0 476.6,445.6 475.8,447.6 475.0,447.1 474.2,446.0 473.4,447.6 472.6,448.0 471.8,445.9 471.0,446.4 470.2,445.9 469.4,444.2 468.6,438.9 467.8,434.1 467.0,430.9 466.2,430.0 465.4,428.8 464.6,427.5" fill="rgba(190,182,240,0.45)" clip-path="url(#nc3)"/><clipPath id="nc4"><rect x="556" y="327.5" width="134.80" height="41.25"/></clipPath><rect x="555.5" y="326.5" width="135.80" height="43.25" fill="#0d0b12" opacity="0.6"/><polygon points="557.0,347.3 557.8,343.5 558.6,336.8 559.4,334.6 560.2,335.8 561.0,334.6 561.8,335.0 562.6,336.0 563.4,336.4 564.2,337.6 565.0,337.8 565.8,337.8 566.6,338.3 567.4,339.1 568.2,340.3 569.0,340.6 569.8,340.5 570.6,341.5 571.4,341.6 572.2,342.2 573.0,342.0 573.8,341.9 574.6,342.2 575.4,342.2 576.2,342.0 577.0,342.1 577.8,341.8 578.6,341.3 579.4,341.6 580.2,341.2 581.0,340.9 581.8,341.0 582.6,341.5 583.4,341.1 584.2,341.3 585.0,341.1 585.8,340.9 586.6,340.2 587.4,340.6 588.2,340.4 589.0,340.6 589.8,339.9 590.6,340.4 591.4,336.9 592.2,332.2 593.0,332.3 593.8,331.9 594.6,332.4 595.4,332.9 596.2,331.7 597.0,332.8 597.8,331.1 598.6,332.3 599.4,332.0 600.2,332.3 601.0,333.1 601.8,333.2 602.6,331.6 603.4,331.8 604.2,332.0 605.0,333.1 605.8,333.0 606.6,332.8 607.4,331.4 608.2,331.5 609.0,332.5 609.8,332.5 610.6,332.7 611.4,332.8 612.2,331.7 613.0,332.6 613.8,333.4 614.6,332.1 615.4,332.9 616.2,332.2 617.0,332.4 617.8,333.0 618.6,333.2 619.4,332.3 620.2,333.2 621.0,332.5 621.8,333.8 622.6,333.4 623.4,333.0 624.2,333.2 625.0,336.4 625.8,339.5 626.6,342.2 627.4,342.1 628.2,342.0 629.0,342.3 629.8,342.5 630.6,342.0 631.4,342.1 632.2,342.1 633.0,342.0 633.8,342.1 634.6,342.0 635.4,341.5 636.2,341.1 637.0,339.5 637.8,338.4 638.6,336.4 639.4,335.2 640.2,334.6 641.0,333.2 641.8,332.8 642.6,332.0 643.4,331.8 644.2,332.7 645.0,333.3 645.8,332.9 646.6,333.3 647.4,332.9 648.2,332.6 649.0,332.8 649.8,332.9 650.6,332.5 651.4,332.7 652.2,333.6 653.0,333.3 653.8,332.8 654.6,333.5 655.4,333.1 656.2,334.6 657.0,333.9 657.8,334.0 658.6,334.5 659.4,334.9 660.2,333.7 661.0,333.9 661.8,334.6 662.6,334.1 663.4,335.1 664.2,333.9 665.0,334.8 665.8,334.8 666.6,334.0 667.4,333.1 668.2,334.3 669.0,333.5 669.8,332.3 670.6,333.0 671.4,331.3 672.2,331.8 673.0,331.5 673.8,331.0 674.6,330.7 675.4,330.9 676.2,331.3 677.0,331.3 677.8,331.2 678.6,333.4 679.4,333.5 680.2,333.7 681.0,336.2 681.8,336.6 682.6,337.2 683.4,338.4 684.2,339.3 685.0,339.4 685.8,340.3 686.6,340.7 687.4,341.3 688.2,343.5 689.0,345.4 689.8,346.9 690.4,347.3 690.4,347.3 689.8,347.7 689.0,349.2 688.2,351.4 687.4,353.1 686.6,354.7 685.8,354.9 685.0,354.6 684.2,355.4 683.4,356.9 682.6,357.5 681.8,358.6 681.0,360.1 680.2,360.9 679.4,362.7 678.6,362.4 677.8,363.9 677.0,364.0 676.2,364.8 675.4,364.2 674.6,363.9 673.8,363.2 673.0,364.0 672.2,363.5 671.4,362.8 670.6,362.3 669.8,362.2 669.0,363.4 668.2,362.3 667.4,362.6 666.6,361.3 665.8,361.7 665.0,361.1 664.2,360.9 663.4,360.3 662.6,360.7 661.8,360.4 661.0,361.7 660.2,360.8 659.4,360.8 658.6,361.2 657.8,362.2 657.0,360.9 656.2,361.8 655.4,360.8 654.6,361.6 653.8,362.9 653.0,362.3 652.2,361.6 651.4,362.7 650.6,362.4 649.8,363.6 649.0,362.4 648.2,362.1 647.4,362.0 646.6,363.8 645.8,363.1 645.0,363.2 644.2,364.4 643.4,363.8 642.6,363.5 641.8,362.5 641.0,362.1 640.2,360.9 639.4,359.7 638.6,357.9 637.8,357.2 637.0,355.6 636.2,353.8 635.4,353.2 634.6,352.7 633.8,352.4 633.0,352.4 632.2,352.1 631.4,352.5 630.6,352.3 629.8,352.5 629.0,352.3 628.2,352.6 627.4,352.4 626.6,352.7 625.8,355.5 625.0,359.3 624.2,362.7 623.4,363.3 622.6,363.0 621.8,362.7 621.0,362.7 620.2,363.5 619.4,362.9 618.6,362.5 617.8,362.9 617.0,363.0 616.2,362.8 615.4,363.0 614.6,363.1 613.8,361.9 613.0,362.0 612.2,362.6 611.4,363.2 610.6,361.6 609.8,361.8 609.0,362.7 608.2,362.1 607.4,362.8 606.6,362.0 605.8,362.8 605.0,361.9 604.2,362.6 603.4,362.9 602.6,361.3 601.8,362.0 601.0,362.8 600.2,361.8 599.4,362.5 598.6,361.4 597.8,361.9 597.0,361.0 596.2,362.7 595.4,361.1 594.6,361.1 593.8,361.4 593.0,362.5 592.2,362.1 591.4,357.6 590.6,355.1 589.8,354.8 589.0,354.7 588.2,354.8 587.4,354.4 586.6,354.9 585.8,354.7 585.0,354.9 584.2,354.1 583.4,354.6 582.6,354.8 581.8,354.8 581.0,354.0 580.2,354.1 579.4,354.5 578.6,354.5 577.8,354.3 577.0,354.7 576.2,354.6 575.4,354.1 574.6,354.2 573.8,354.3 573.0,355.0 572.2,355.0 571.4,355.0 570.6,355.5 569.8,355.6 569.0,355.2 568.2,356.3 567.4,355.7 566.6,356.1 565.8,356.4 565.0,357.7 564.2,357.1 563.4,357.9 562.6,357.7 561.8,357.7 561.0,358.7 560.2,358.5 559.4,359.3 558.6,357.1 557.8,350.8 557.0,347.3" fill="#6c6a77"/><rect x="556" y="327.5" width="134.80" height="41.25" fill="#6a5ad8"/><polygon points="557.0,347.3 557.8,343.5 558.6,336.8 559.4,334.6 560.2,335.8 561.0,334.6 561.8,335.0 562.6,336.0 563.4,336.4 564.2,337.6 565.0,337.8 565.8,337.8 566.6,338.3 567.4,339.1 568.2,340.3 569.0,340.6 569.8,340.5 570.6,341.5 571.4,341.6 572.2,342.2 573.0,342.0 573.8,341.9 574.6,342.2 575.4,342.2 576.2,342.0 577.0,342.1 577.8,341.8 578.6,341.3 579.4,341.6 580.2,341.2 581.0,340.9 581.8,341.0 582.6,341.5 583.4,341.1 584.2,341.3 585.0,341.1 585.8,340.9 586.6,340.2 587.4,340.6 588.2,340.4 589.0,340.6 589.8,339.9 590.6,340.4 591.4,336.9 592.2,332.2 593.0,332.3 593.8,331.9 594.6,332.4 595.4,332.9 596.2,331.7 597.0,332.8 597.8,331.1 598.6,332.3 599.4,332.0 600.2,332.3 601.0,333.1 601.8,333.2 602.6,331.6 603.4,331.8 604.2,332.0 605.0,333.1 605.8,333.0 606.6,332.8 607.4,331.4 608.2,331.5 609.0,332.5 609.8,332.5 610.6,332.7 611.4,332.8 612.2,331.7 613.0,332.6 613.8,333.4 614.6,332.1 615.4,332.9 616.2,332.2 617.0,332.4 617.8,333.0 618.6,333.2 619.4,332.3 620.2,333.2 621.0,332.5 621.8,333.8 622.6,333.4 623.4,333.0 624.2,333.2 625.0,336.4 625.8,339.5 626.6,342.2 627.4,342.1 628.2,342.0 629.0,342.3 629.8,342.5 630.6,342.0 631.4,342.1 632.2,342.1 633.0,342.0 633.8,342.1 634.6,342.0 635.4,341.5 636.2,341.1 637.0,339.5 637.8,338.4 638.6,336.4 639.4,335.2 640.2,334.6 641.0,333.2 641.8,332.8 642.6,332.0 643.4,331.8 644.2,332.7 645.0,333.3 645.8,332.9 646.6,333.3 647.4,332.9 648.2,332.6 649.0,332.8 649.8,332.9 650.6,332.5 651.4,332.7 652.2,333.6 653.0,333.3 653.8,332.8 654.6,333.5 655.4,333.1 656.2,334.6 657.0,333.9 657.8,334.0 658.6,334.5 659.4,334.9 660.2,333.7 661.0,333.9 661.8,334.6 662.6,334.1 663.4,335.1 664.2,333.9 665.0,334.8 665.8,334.8 666.6,334.0 667.4,333.1 668.2,334.3 669.0,333.5 669.8,332.3 670.6,333.0 671.4,331.3 672.2,331.8 673.0,331.5 673.8,331.0 674.6,330.7 675.4,330.9 676.2,331.3 677.0,331.3 677.8,331.2 678.6,333.4 679.4,333.5 680.2,333.7 681.0,336.2 681.8,336.6 682.6,337.2 683.4,338.4 684.2,339.3 685.0,339.4 685.8,340.3 686.6,340.7 687.4,341.3 688.2,343.5 689.0,345.4 689.8,346.9 690.4,347.3 690.4,347.3 689.8,347.7 689.0,349.2 688.2,351.4 687.4,353.1 686.6,354.7 685.8,354.9 685.0,354.6 684.2,355.4 683.4,356.9 682.6,357.5 681.8,358.6 681.0,360.1 680.2,360.9 679.4,362.7 678.6,362.4 677.8,363.9 677.0,364.0 676.2,364.8 675.4,364.2 674.6,363.9 673.8,363.2 673.0,364.0 672.2,363.5 671.4,362.8 670.6,362.3 669.8,362.2 669.0,363.4 668.2,362.3 667.4,362.6 666.6,361.3 665.8,361.7 665.0,361.1 664.2,360.9 663.4,360.3 662.6,360.7 661.8,360.4 661.0,361.7 660.2,360.8 659.4,360.8 658.6,361.2 657.8,362.2 657.0,360.9 656.2,361.8 655.4,360.8 654.6,361.6 653.8,362.9 653.0,362.3 652.2,361.6 651.4,362.7 650.6,362.4 649.8,363.6 649.0,362.4 648.2,362.1 647.4,362.0 646.6,363.8 645.8,363.1 645.0,363.2 644.2,364.4 643.4,363.8 642.6,363.5 641.8,362.5 641.0,362.1 640.2,360.9 639.4,359.7 638.6,357.9 637.8,357.2 637.0,355.6 636.2,353.8 635.4,353.2 634.6,352.7 633.8,352.4 633.0,352.4 632.2,352.1 631.4,352.5 630.6,352.3 629.8,352.5 629.0,352.3 628.2,352.6 627.4,352.4 626.6,352.7 625.8,355.5 625.0,359.3 624.2,362.7 623.4,363.3 622.6,363.0 621.8,362.7 621.0,362.7 620.2,363.5 619.4,362.9 618.6,362.5 617.8,362.9 617.0,363.0 616.2,362.8 615.4,363.0 614.6,363.1 613.8,361.9 613.0,362.0 612.2,362.6 611.4,363.2 610.6,361.6 609.8,361.8 609.0,362.7 608.2,362.1 607.4,362.8 606.6,362.0 605.8,362.8 605.0,361.9 604.2,362.6 603.4,362.9 602.6,361.3 601.8,362.0 601.0,362.8 600.2,361.8 599.4,362.5 598.6,361.4 597.8,361.9 597.0,361.0 596.2,362.7 595.4,361.1 594.6,361.1 593.8,361.4 593.0,362.5 592.2,362.1 591.4,357.6 590.6,355.1 589.8,354.8 589.0,354.7 588.2,354.8 587.4,354.4 586.6,354.9 585.8,354.7 585.0,354.9 584.2,354.1 583.4,354.6 582.6,354.8 581.8,354.8 581.0,354.0 580.2,354.1 579.4,354.5 578.6,354.5 577.8,354.3 577.0,354.7 576.2,354.6 575.4,354.1 574.6,354.2 573.8,354.3 573.0,355.0 572.2,355.0 571.4,355.0 570.6,355.5 569.8,355.6 569.0,355.2 568.2,356.3 567.4,355.7 566.6,356.1 565.8,356.4 565.0,357.7 564.2,357.1 563.4,357.9 562.6,357.7 561.8,357.7 561.0,358.7 560.2,358.5 559.4,359.3 558.6,357.1 557.8,350.8 557.0,347.3" fill="rgba(190,182,240,0.45)" clip-path="url(#nc4)"/><clipPath id="nc5"><rect x="705.5" y="191.8" width="49.10" height="41.80"/><rect x="754.6" y="191.8" width="124.30" height="41.80"/></clipPath><rect x="705.0" y="190.8" width="50.10" height="43.80" fill="#0d0b12" opacity="0.6"/><rect x="754.1" y="190.8" width="125.30" height="43.80" fill="#0d0b12" opacity="0.6"/><polygon points="705.5,213.0 706.3,212.7 707.1,212.7 707.9,212.7 708.7,212.7 709.5,212.7 710.3,212.7 711.1,212.7 711.9,212.7 712.7,212.7 713.5,212.7 714.3,212.7 715.1,212.6 715.9,212.6 716.7,212.6 717.5,212.6 718.3,212.6 719.1,212.6 719.9,212.6 720.7,212.6 721.5,212.6 722.3,212.6 723.1,212.6 723.9,212.6 724.7,212.6 725.5,212.6 726.3,212.6 727.1,212.6 727.9,212.6 728.7,212.6 729.5,212.6 730.3,212.6 731.1,212.6 731.9,212.5 732.7,212.5 733.5,212.5 734.3,212.5 735.1,212.5 735.9,212.5 736.7,212.5 737.5,212.5 738.3,212.5 739.1,212.5 739.9,212.5 740.7,212.4 741.5,212.4 742.3,212.3 743.1,212.3 743.9,212.2 744.7,212.1 745.5,212.1 746.3,212.0 747.1,211.9 747.9,211.9 748.7,211.8 749.5,211.7 750.3,211.7 751.1,211.9 751.9,212.0 752.7,212.1 753.5,212.3 754.3,212.4 755.1,212.6 755.9,211.8 756.7,207.5 757.5,201.9 758.3,197.3 759.1,192.5 759.9,190.9 760.7,184.4 761.5,178.0 762.3,178.0 763.1,178.7 763.9,177.8 764.7,183.2 765.5,187.2 766.3,203.5 767.1,203.8 767.9,204.6 768.7,204.0 769.5,203.6 770.3,204.5 771.1,204.3 771.9,203.6 772.7,204.0 773.5,203.8 774.3,204.7 775.1,204.0 775.9,204.0 776.7,203.7 777.5,204.6 778.3,204.4 779.1,204.2 779.9,204.5 780.7,203.9 781.5,203.8 782.3,204.3 783.1,204.0 783.9,204.3 784.7,204.6 785.5,204.7 786.3,203.8 787.1,203.5 787.9,199.0 788.7,196.0 789.5,196.3 790.3,195.3 791.1,195.8 791.9,195.8 792.7,194.8 793.5,195.2 794.3,195.8 795.1,195.7 795.9,194.9 796.7,194.5 797.5,194.8 798.3,193.0 799.1,194.4 799.9,193.6 800.7,193.7 801.5,192.5 802.3,193.2 803.1,192.8 803.9,193.9 804.7,194.7 805.5,194.0 806.3,195.6 807.1,195.5 807.9,196.8 808.7,196.9 809.5,196.6 810.3,195.8 811.1,197.5 811.9,196.9 812.7,196.9 813.5,197.8 814.3,199.3 815.1,203.9 815.9,209.1 816.7,209.6 817.5,202.0 818.3,192.5 819.1,190.5 819.9,192.4 820.7,193.3 821.5,192.0 822.3,193.2 823.1,194.9 823.9,197.3 824.7,196.6 825.5,197.7 826.3,199.1 827.1,200.7 827.9,204.5 828.7,205.2 829.5,205.1 830.3,204.9 831.1,204.8 831.9,205.5 832.7,204.8 833.5,205.3 834.3,204.8 835.1,203.9 835.9,203.8 836.7,204.4 837.5,203.8 838.3,203.9 839.1,203.8 839.9,204.2 840.7,204.2 841.5,203.9 842.3,203.7 843.1,203.3 843.9,203.4 844.7,202.3 845.5,203.2 846.3,198.2 847.1,187.8 847.9,189.7 848.7,189.5 849.5,190.2 850.3,190.6 851.1,191.1 851.9,192.0 852.7,193.4 853.5,195.7 854.3,196.1 855.1,197.5 855.9,197.8 856.7,198.0 857.5,196.7 858.3,193.3 859.1,193.8 859.9,194.5 860.7,193.4 861.5,194.8 862.3,195.0 863.1,192.8 863.9,192.9 864.7,193.5 865.5,193.6 866.3,194.1 867.1,193.1 867.9,193.3 868.7,193.8 869.5,193.2 870.3,192.7 871.1,193.5 871.9,195.0 872.7,195.2 873.5,195.0 874.3,195.2 875.1,192.8 875.9,193.1 876.7,194.9 877.5,198.0 878.1,213.5 878.1,213.5 877.5,228.3 876.7,231.0 875.9,231.1 875.1,232.0 874.3,233.1 873.5,233.2 872.7,231.7 871.9,232.2 871.1,232.6 870.3,232.4 869.5,232.5 868.7,231.3 867.9,231.1 867.1,232.5 866.3,231.0 865.5,231.2 864.7,232.2 863.9,232.3 863.1,230.5 862.3,230.7 861.5,231.9 860.7,232.4 859.9,231.4 859.1,232.5 858.3,230.8 857.5,230.7 856.7,229.6 855.9,230.5 855.1,231.1 854.3,230.2 853.5,232.4 852.7,234.4 851.9,233.9 851.1,235.7 850.3,236.8 849.5,238.7 848.7,237.7 847.9,237.7 847.1,238.5 846.3,229.4 845.5,224.0 844.7,223.9 843.9,223.9 843.1,223.2 842.3,223.4 841.5,222.8 840.7,222.8 839.9,222.6 839.1,221.8 838.3,222.0 837.5,221.4 836.7,221.1 835.9,221.5 835.1,221.3 834.3,220.4 833.5,220.3 832.7,220.3 831.9,220.3 831.1,219.4 830.3,219.5 829.5,219.2 828.7,218.8 827.9,219.9 827.1,228.5 826.3,230.4 825.5,230.1 824.7,230.7 823.9,232.7 823.1,233.3 822.3,233.3 821.5,235.5 820.7,235.5 819.9,236.7 819.1,236.7 818.3,235.7 817.5,225.9 816.7,217.2 815.9,217.6 815.1,223.3 814.3,227.5 813.5,228.4 812.7,229.4 811.9,228.9 811.1,230.3 810.3,228.7 809.5,230.9 808.7,230.7 807.9,231.2 807.1,229.8 806.3,230.0 805.5,232.5 804.7,231.7 803.9,231.6 803.1,232.0 802.3,233.8 801.5,232.5 800.7,232.4 799.9,231.9 799.1,232.7 798.3,232.9 797.5,232.3 796.7,233.5 795.9,231.7 795.1,232.4 794.3,231.0 793.5,232.7 792.7,231.4 791.9,230.8 791.1,232.2 790.3,231.7 789.5,232.3 788.7,232.3 787.9,228.2 787.1,222.6 786.3,222.7 785.5,222.8 784.7,223.5 783.9,222.7 783.1,222.6 782.3,223.4 781.5,222.3 780.7,222.3 779.9,223.3 779.1,222.4 778.3,222.5 777.5,223.1 776.7,222.9 775.9,222.4 775.1,222.6 774.3,222.7 773.5,223.4 772.7,223.1 771.9,222.9 771.1,223.4 770.3,223.0 769.5,223.0 768.7,222.6 767.9,222.5 767.1,222.8 766.3,224.4 765.5,238.1 764.7,243.3 763.9,246.8 763.1,249.9 762.3,249.1 761.5,246.6 760.7,244.0 759.9,237.2 759.1,235.3 758.3,231.2 757.5,224.7 756.7,219.5 755.9,215.2 755.1,214.4 754.3,214.6 753.5,214.7 752.7,214.9 751.9,215.0 751.1,215.1 750.3,215.3 749.5,215.3 748.7,215.2 747.9,215.1 747.1,215.1 746.3,215.0 745.5,214.9 744.7,214.9 743.9,214.8 743.1,214.7 742.3,214.7 741.5,214.6 740.7,214.6 739.9,214.5 739.1,214.5 738.3,214.5 737.5,214.5 736.7,214.5 735.9,214.5 735.1,214.5 734.3,214.5 733.5,214.5 732.7,214.5 731.9,214.5 731.1,214.4 730.3,214.4 729.5,214.4 728.7,214.4 727.9,214.4 727.1,214.4 726.3,214.4 725.5,214.4 724.7,214.4 723.9,214.4 723.1,214.4 722.3,214.4 721.5,214.4 720.7,214.4 719.9,214.4 719.1,214.4 718.3,214.4 717.5,214.4 716.7,214.4 715.9,214.4 715.1,214.4 714.3,214.3 713.5,214.3 712.7,214.3 711.9,214.3 711.1,214.3 710.3,214.3 709.5,214.3 708.7,214.3 707.9,214.3 707.1,214.3 706.3,214.3 705.5,214.0" fill="#6c6a77"/><rect x="705.5" y="191.8" width="49.10" height="41.80" fill="#237a5b"/><rect x="754.6" y="191.8" width="124.30" height="41.80" fill="#6a5ad8"/><polygon points="705.5,213.0 706.3,212.7 707.1,212.7 707.9,212.7 708.7,212.7 709.5,212.7 710.3,212.7 711.1,212.7 711.9,212.7 712.7,212.7 713.5,212.7 714.3,212.7 715.1,212.6 715.9,212.6 716.7,212.6 717.5,212.6 718.3,212.6 719.1,212.6 719.9,212.6 720.7,212.6 721.5,212.6 722.3,212.6 723.1,212.6 723.9,212.6 724.7,212.6 725.5,212.6 726.3,212.6 727.1,212.6 727.9,212.6 728.7,212.6 729.5,212.6 730.3,212.6 731.1,212.6 731.9,212.5 732.7,212.5 733.5,212.5 734.3,212.5 735.1,212.5 735.9,212.5 736.7,212.5 737.5,212.5 738.3,212.5 739.1,212.5 739.9,212.5 740.7,212.4 741.5,212.4 742.3,212.3 743.1,212.3 743.9,212.2 744.7,212.1 745.5,212.1 746.3,212.0 747.1,211.9 747.9,211.9 748.7,211.8 749.5,211.7 750.3,211.7 751.1,211.9 751.9,212.0 752.7,212.1 753.5,212.3 754.3,212.4 755.1,212.6 755.9,211.8 756.7,207.5 757.5,201.9 758.3,197.3 759.1,192.5 759.9,190.9 760.7,184.4 761.5,178.0 762.3,178.0 763.1,178.7 763.9,177.8 764.7,183.2 765.5,187.2 766.3,203.5 767.1,203.8 767.9,204.6 768.7,204.0 769.5,203.6 770.3,204.5 771.1,204.3 771.9,203.6 772.7,204.0 773.5,203.8 774.3,204.7 775.1,204.0 775.9,204.0 776.7,203.7 777.5,204.6 778.3,204.4 779.1,204.2 779.9,204.5 780.7,203.9 781.5,203.8 782.3,204.3 783.1,204.0 783.9,204.3 784.7,204.6 785.5,204.7 786.3,203.8 787.1,203.5 787.9,199.0 788.7,196.0 789.5,196.3 790.3,195.3 791.1,195.8 791.9,195.8 792.7,194.8 793.5,195.2 794.3,195.8 795.1,195.7 795.9,194.9 796.7,194.5 797.5,194.8 798.3,193.0 799.1,194.4 799.9,193.6 800.7,193.7 801.5,192.5 802.3,193.2 803.1,192.8 803.9,193.9 804.7,194.7 805.5,194.0 806.3,195.6 807.1,195.5 807.9,196.8 808.7,196.9 809.5,196.6 810.3,195.8 811.1,197.5 811.9,196.9 812.7,196.9 813.5,197.8 814.3,199.3 815.1,203.9 815.9,209.1 816.7,209.6 817.5,202.0 818.3,192.5 819.1,190.5 819.9,192.4 820.7,193.3 821.5,192.0 822.3,193.2 823.1,194.9 823.9,197.3 824.7,196.6 825.5,197.7 826.3,199.1 827.1,200.7 827.9,204.5 828.7,205.2 829.5,205.1 830.3,204.9 831.1,204.8 831.9,205.5 832.7,204.8 833.5,205.3 834.3,204.8 835.1,203.9 835.9,203.8 836.7,204.4 837.5,203.8 838.3,203.9 839.1,203.8 839.9,204.2 840.7,204.2 841.5,203.9 842.3,203.7 843.1,203.3 843.9,203.4 844.7,202.3 845.5,203.2 846.3,198.2 847.1,187.8 847.9,189.7 848.7,189.5 849.5,190.2 850.3,190.6 851.1,191.1 851.9,192.0 852.7,193.4 853.5,195.7 854.3,196.1 855.1,197.5 855.9,197.8 856.7,198.0 857.5,196.7 858.3,193.3 859.1,193.8 859.9,194.5 860.7,193.4 861.5,194.8 862.3,195.0 863.1,192.8 863.9,192.9 864.7,193.5 865.5,193.6 866.3,194.1 867.1,193.1 867.9,193.3 868.7,193.8 869.5,193.2 870.3,192.7 871.1,193.5 871.9,195.0 872.7,195.2 873.5,195.0 874.3,195.2 875.1,192.8 875.9,193.1 876.7,194.9 877.5,198.0 878.1,213.5 878.1,213.5 877.5,228.3 876.7,231.0 875.9,231.1 875.1,232.0 874.3,233.1 873.5,233.2 872.7,231.7 871.9,232.2 871.1,232.6 870.3,232.4 869.5,232.5 868.7,231.3 867.9,231.1 867.1,232.5 866.3,231.0 865.5,231.2 864.7,232.2 863.9,232.3 863.1,230.5 862.3,230.7 861.5,231.9 860.7,232.4 859.9,231.4 859.1,232.5 858.3,230.8 857.5,230.7 856.7,229.6 855.9,230.5 855.1,231.1 854.3,230.2 853.5,232.4 852.7,234.4 851.9,233.9 851.1,235.7 850.3,236.8 849.5,238.7 848.7,237.7 847.9,237.7 847.1,238.5 846.3,229.4 845.5,224.0 844.7,223.9 843.9,223.9 843.1,223.2 842.3,223.4 841.5,222.8 840.7,222.8 839.9,222.6 839.1,221.8 838.3,222.0 837.5,221.4 836.7,221.1 835.9,221.5 835.1,221.3 834.3,220.4 833.5,220.3 832.7,220.3 831.9,220.3 831.1,219.4 830.3,219.5 829.5,219.2 828.7,218.8 827.9,219.9 827.1,228.5 826.3,230.4 825.5,230.1 824.7,230.7 823.9,232.7 823.1,233.3 822.3,233.3 821.5,235.5 820.7,235.5 819.9,236.7 819.1,236.7 818.3,235.7 817.5,225.9 816.7,217.2 815.9,217.6 815.1,223.3 814.3,227.5 813.5,228.4 812.7,229.4 811.9,228.9 811.1,230.3 810.3,228.7 809.5,230.9 808.7,230.7 807.9,231.2 807.1,229.8 806.3,230.0 805.5,232.5 804.7,231.7 803.9,231.6 803.1,232.0 802.3,233.8 801.5,232.5 800.7,232.4 799.9,231.9 799.1,232.7 798.3,232.9 797.5,232.3 796.7,233.5 795.9,231.7 795.1,232.4 794.3,231.0 793.5,232.7 792.7,231.4 791.9,230.8 791.1,232.2 790.3,231.7 789.5,232.3 788.7,232.3 787.9,228.2 787.1,222.6 786.3,222.7 785.5,222.8 784.7,223.5 783.9,222.7 783.1,222.6 782.3,223.4 781.5,222.3 780.7,222.3 779.9,223.3 779.1,222.4 778.3,222.5 777.5,223.1 776.7,222.9 775.9,222.4 775.1,222.6 774.3,222.7 773.5,223.4 772.7,223.1 771.9,222.9 771.1,223.4 770.3,223.0 769.5,223.0 768.7,222.6 767.9,222.5 767.1,222.8 766.3,224.4 765.5,238.1 764.7,243.3 763.9,246.8 763.1,249.9 762.3,249.1 761.5,246.6 760.7,244.0 759.9,237.2 759.1,235.3 758.3,231.2 757.5,224.7 756.7,219.5 755.9,215.2 755.1,214.4 754.3,214.6 753.5,214.7 752.7,214.9 751.9,215.0 751.1,215.1 750.3,215.3 749.5,215.3 748.7,215.2 747.9,215.1 747.1,215.1 746.3,215.0 745.5,214.9 744.7,214.9 743.9,214.8 743.1,214.7 742.3,214.7 741.5,214.6 740.7,214.6 739.9,214.5 739.1,214.5 738.3,214.5 737.5,214.5 736.7,214.5 735.9,214.5 735.1,214.5 734.3,214.5 733.5,214.5 732.7,214.5 731.9,214.5 731.1,214.4 730.3,214.4 729.5,214.4 728.7,214.4 727.9,214.4 727.1,214.4 726.3,214.4 725.5,214.4 724.7,214.4 723.9,214.4 723.1,214.4 722.3,214.4 721.5,214.4 720.7,214.4 719.9,214.4 719.1,214.4 718.3,214.4 717.5,214.4 716.7,214.4 715.9,214.4 715.1,214.4 714.3,214.3 713.5,214.3 712.7,214.3 711.9,214.3 711.1,214.3 710.3,214.3 709.5,214.3 708.7,214.3 707.9,214.3 707.1,214.3 706.3,214.3 705.5,214.0" fill="rgba(190,182,240,0.45)" clip-path="url(#nc5)"/><clipPath id="nc6"><rect x="878.5" y="427" width="52.60" height="41.40"/><rect x="932" y="427" width="17.90" height="41.40"/></clipPath><rect x="878.0" y="426" width="53.60" height="43.40" fill="#0d0b12" opacity="0.6"/><rect x="931.5" y="426" width="18.90" height="43.40" fill="#0d0b12" opacity="0.6"/><polygon points="878.5,444.4 879.3,440.7 880.1,438.6 880.9,438.5 881.7,437.1 882.5,435.2 883.3,432.5 884.1,431.4 884.9,428.8 885.7,428.3 886.5,427.4 887.3,428.1 888.1,430.7 888.9,431.1 889.7,432.4 890.5,432.4 891.3,433.7 892.1,435.6 892.9,435.3 893.7,436.6 894.5,436.7 895.3,436.2 896.1,436.6 896.9,435.3 897.7,433.7 898.5,431.8 899.3,431.7 900.1,431.2 900.9,430.5 901.7,428.0 902.5,426.5 903.3,417.1 904.1,415.0 904.9,408.8 905.7,408.7 906.5,409.7 907.3,405.3 908.1,403.0 908.9,405.6 909.7,408.8 910.5,409.1 911.3,410.9 912.1,413.5 912.9,418.3 913.7,424.3 914.5,429.6 915.3,430.8 916.1,435.6 916.9,439.4 917.7,441.7 918.5,443.2 919.3,443.7 920.1,443.9 920.9,444.9 921.7,445.2 922.5,445.4 923.3,446.2 924.1,446.7 924.9,447.1 925.7,446.0 926.5,444.9 927.3,443.9 928.1,444.9 928.9,446.1 929.7,446.9 930.5,447.9 931.3,445.9 932.1,438.3 932.9,430.7 933.7,430.1 934.5,431.9 935.3,434.7 936.1,434.7 936.9,437.6 937.7,441.5 938.5,445.2 939.3,447.2 940.1,447.2 940.9,447.3 941.7,447.3 942.5,447.4 943.3,447.4 944.1,447.4 944.9,447.5 945.7,447.5 946.5,447.5 947.3,447.6 948.1,447.6 948.9,447.7 949.7,447.7 949.9,447.7 949.9,450.7 949.7,450.7 948.9,450.7 948.1,450.8 947.3,450.8 946.5,450.9 945.7,450.9 944.9,450.9 944.1,451.0 943.3,451.0 942.5,451.0 941.7,451.1 940.9,451.1 940.1,451.2 939.3,451.2 938.5,453.2 937.7,456.7 936.9,461.0 936.1,462.8 935.3,465.0 934.5,465.9 933.7,466.9 932.9,465.3 932.1,459.1 931.3,452.2 930.5,450.4 929.7,451.1 928.9,451.8 928.1,452.5 927.3,453.2 926.5,452.6 925.7,451.7 924.9,451.3 924.1,451.7 923.3,452.2 922.5,452.8 921.7,453.3 920.9,453.8 920.1,454.2 919.3,454.9 918.5,455.3 917.7,456.0 916.9,459.7 916.1,463.1 915.3,467.7 914.5,469.7 913.7,474.2 912.9,480.0 912.1,483.6 911.3,489.3 910.5,487.3 909.7,490.5 908.9,493.1 908.1,491.0 907.3,493.9 906.5,491.1 905.7,489.7 904.9,489.1 904.1,481.8 903.3,479.9 902.5,469.2 901.7,468.7 900.9,468.4 900.1,467.0 899.3,466.4 898.5,463.8 897.7,462.9 896.9,462.9 896.1,461.5 895.3,461.3 894.5,460.7 893.7,461.5 892.9,462.0 892.1,462.5 891.3,463.2 890.5,465.0 889.7,466.6 888.9,468.3 888.1,467.5 887.3,468.7 886.5,468.5 885.7,469.6 884.9,470.4 884.1,467.0 883.3,466.3 882.5,462.5 881.7,461.0 880.9,459.4 880.1,458.3 879.3,456.3 878.5,453.9" fill="#6c6a77"/><rect x="878.5" y="427" width="52.60" height="41.40" fill="#6a5ad8"/><rect x="932" y="427" width="17.90" height="41.40" fill="#237a5b"/><polygon points="878.5,444.4 879.3,440.7 880.1,438.6 880.9,438.5 881.7,437.1 882.5,435.2 883.3,432.5 884.1,431.4 884.9,428.8 885.7,428.3 886.5,427.4 887.3,428.1 888.1,430.7 888.9,431.1 889.7,432.4 890.5,432.4 891.3,433.7 892.1,435.6 892.9,435.3 893.7,436.6 894.5,436.7 895.3,436.2 896.1,436.6 896.9,435.3 897.7,433.7 898.5,431.8 899.3,431.7 900.1,431.2 900.9,430.5 901.7,428.0 902.5,426.5 903.3,417.1 904.1,415.0 904.9,408.8 905.7,408.7 906.5,409.7 907.3,405.3 908.1,403.0 908.9,405.6 909.7,408.8 910.5,409.1 911.3,410.9 912.1,413.5 912.9,418.3 913.7,424.3 914.5,429.6 915.3,430.8 916.1,435.6 916.9,439.4 917.7,441.7 918.5,443.2 919.3,443.7 920.1,443.9 920.9,444.9 921.7,445.2 922.5,445.4 923.3,446.2 924.1,446.7 924.9,447.1 925.7,446.0 926.5,444.9 927.3,443.9 928.1,444.9 928.9,446.1 929.7,446.9 930.5,447.9 931.3,445.9 932.1,438.3 932.9,430.7 933.7,430.1 934.5,431.9 935.3,434.7 936.1,434.7 936.9,437.6 937.7,441.5 938.5,445.2 939.3,447.2 940.1,447.2 940.9,447.3 941.7,447.3 942.5,447.4 943.3,447.4 944.1,447.4 944.9,447.5 945.7,447.5 946.5,447.5 947.3,447.6 948.1,447.6 948.9,447.7 949.7,447.7 949.9,447.7 949.9,450.7 949.7,450.7 948.9,450.7 948.1,450.8 947.3,450.8 946.5,450.9 945.7,450.9 944.9,450.9 944.1,451.0 943.3,451.0 942.5,451.0 941.7,451.1 940.9,451.1 940.1,451.2 939.3,451.2 938.5,453.2 937.7,456.7 936.9,461.0 936.1,462.8 935.3,465.0 934.5,465.9 933.7,466.9 932.9,465.3 932.1,459.1 931.3,452.2 930.5,450.4 929.7,451.1 928.9,451.8 928.1,452.5 927.3,453.2 926.5,452.6 925.7,451.7 924.9,451.3 924.1,451.7 923.3,452.2 922.5,452.8 921.7,453.3 920.9,453.8 920.1,454.2 919.3,454.9 918.5,455.3 917.7,456.0 916.9,459.7 916.1,463.1 915.3,467.7 914.5,469.7 913.7,474.2 912.9,480.0 912.1,483.6 911.3,489.3 910.5,487.3 909.7,490.5 908.9,493.1 908.1,491.0 907.3,493.9 906.5,491.1 905.7,489.7 904.9,489.1 904.1,481.8 903.3,479.9 902.5,469.2 901.7,468.7 900.9,468.4 900.1,467.0 899.3,466.4 898.5,463.8 897.7,462.9 896.9,462.9 896.1,461.5 895.3,461.3 894.5,460.7 893.7,461.5 892.9,462.0 892.1,462.5 891.3,463.2 890.5,465.0 889.7,466.6 888.9,468.3 888.1,467.5 887.3,468.7 886.5,468.5 885.7,469.6 884.9,470.4 884.1,467.0 883.3,466.3 882.5,462.5 881.7,461.0 880.9,459.4 880.1,458.3 879.3,456.3 878.5,453.9" fill="rgba(190,182,240,0.45)" clip-path="url(#nc6)"/><path d="M100.10,600.60 C100.47,600.15 101.27,597.38 102.30,597.90 C103.33,598.42 104.97,602.52 106.30,603.70 C107.63,604.88 109.05,604.05 110.30,605.00 C111.55,605.95 112.77,607.78 113.80,609.40 C114.83,611.02 115.83,616.32 116.50,614.70 C117.17,613.08 117.22,603.02 117.80,599.70 C118.38,596.38 118.47,595.53 120.00,594.80 C121.53,594.07 123.92,594.77 127.00,595.30 C130.08,595.83 135.55,597.72 138.50,598.00 C141.45,598.28 143.38,598.18 144.70,597.00 C146.02,595.82 145.88,594.13 146.40,590.90 C146.92,587.67 146.92,583.72 147.80,577.60 C148.68,571.48 150.28,562.63 151.70,554.20 C153.12,545.77 154.97,536.45 156.30,527.00 C157.63,517.55 159.02,506.57 159.70,497.50 C160.38,488.43 161.35,481.28 160.40,472.60 C159.45,463.92 155.63,453.33 154.00,445.40 C152.37,437.47 151.05,429.93 150.60,425.00 C150.15,420.07 150.55,418.85 151.30,415.80 C152.05,412.75 153.97,411.23 155.10,406.70 C156.23,402.17 156.83,394.90 158.10,388.60 C159.37,382.30 161.18,374.45 162.70,368.90 C164.22,363.35 165.70,358.95 167.20,355.30 C168.70,351.65 170.32,348.13 171.70,347.00 C173.08,345.87 174.37,347.12 175.50,348.50 C176.63,349.88 177.37,354.28 178.50,355.30 C179.63,356.32 181.17,355.85 182.30,354.60 C183.43,353.35 184.03,351.07 185.30,347.80 C186.57,344.53 188.13,338.78 189.90,335.00 C191.67,331.22 194.15,327.63 195.90,325.10 C197.65,322.57 199.38,318.53 200.40,319.80 C201.42,321.07 201.48,329.80 202.00,332.70 C202.52,335.60 201.75,334.43 203.50,337.20 C205.25,339.97 210.23,345.77 212.50,349.30 C214.77,352.83 215.83,355.38 217.10,358.40 C218.37,361.42 218.33,363.38 220.10,367.40 C221.87,371.42 225.68,377.72 227.70,382.50 C229.72,387.28 231.07,391.05 232.20,396.10 C233.33,401.15 233.75,408.00 234.50,412.80 C235.25,417.60 236.08,425.67 236.70,424.90 C237.32,424.13 237.70,417.28 238.20,408.20 C238.70,399.12 238.93,379.22 239.70,370.40 C240.47,361.58 241.53,359.32 242.80,355.30 C244.07,351.28 245.92,349.07 247.30,346.30 C248.68,343.53 250.47,339.97 251.10,338.70" fill="none" stroke="#2a1c7a" stroke-opacity="0.28" stroke-width="3.4" stroke-linecap="round" stroke-linejoin="round"/><path d="M100.10,600.60 C100.47,600.15 101.27,597.38 102.30,597.90 C103.33,598.42 104.97,602.52 106.30,603.70 C107.63,604.88 109.05,604.05 110.30,605.00 C111.55,605.95 112.77,607.78 113.80,609.40 C114.83,611.02 115.83,616.32 116.50,614.70 C117.17,613.08 117.22,603.02 117.80,599.70 C118.38,596.38 118.47,595.53 120.00,594.80 C121.53,594.07 123.92,594.77 127.00,595.30 C130.08,595.83 135.55,597.72 138.50,598.00 C141.45,598.28 143.38,598.18 144.70,597.00 C146.02,595.82 145.88,594.13 146.40,590.90 C146.92,587.67 146.92,583.72 147.80,577.60 C148.68,571.48 150.28,562.63 151.70,554.20 C153.12,545.77 154.97,536.45 156.30,527.00 C157.63,517.55 159.02,506.57 159.70,497.50 C160.38,488.43 161.35,481.28 160.40,472.60 C159.45,463.92 155.63,453.33 154.00,445.40 C152.37,437.47 151.05,429.93 150.60,425.00 C150.15,420.07 150.55,418.85 151.30,415.80 C152.05,412.75 153.97,411.23 155.10,406.70 C156.23,402.17 156.83,394.90 158.10,388.60 C159.37,382.30 161.18,374.45 162.70,368.90 C164.22,363.35 165.70,358.95 167.20,355.30 C168.70,351.65 170.32,348.13 171.70,347.00 C173.08,345.87 174.37,347.12 175.50,348.50 C176.63,349.88 177.37,354.28 178.50,355.30 C179.63,356.32 181.17,355.85 182.30,354.60 C183.43,353.35 184.03,351.07 185.30,347.80 C186.57,344.53 188.13,338.78 189.90,335.00 C191.67,331.22 194.15,327.63 195.90,325.10 C197.65,322.57 199.38,318.53 200.40,319.80 C201.42,321.07 201.48,329.80 202.00,332.70 C202.52,335.60 201.75,334.43 203.50,337.20 C205.25,339.97 210.23,345.77 212.50,349.30 C214.77,352.83 215.83,355.38 217.10,358.40 C218.37,361.42 218.33,363.38 220.10,367.40 C221.87,371.42 225.68,377.72 227.70,382.50 C229.72,387.28 231.07,391.05 232.20,396.10 C233.33,401.15 233.75,408.00 234.50,412.80 C235.25,417.60 236.08,425.67 236.70,424.90 C237.32,424.13 237.70,417.28 238.20,408.20 C238.70,399.12 238.93,379.22 239.70,370.40 C240.47,361.58 241.53,359.32 242.80,355.30 C244.07,351.28 245.92,349.07 247.30,346.30 C248.68,343.53 250.47,339.97 251.10,338.70" fill="none" stroke="#dedce6" stroke-width="1.15" stroke-linecap="round" stroke-linejoin="round"/><path d="M294.20,319.20 C296.28,321.00 302.40,326.40 306.70,330.00 C311.00,333.60 316.12,338.72 320.00,340.80 C323.88,342.88 325.83,341.38 330.00,342.50 C334.17,343.62 341.67,345.70 345.00,347.50 C348.33,349.30 347.78,351.35 350.00,353.30 C352.22,355.25 355.52,359.05 358.30,359.20 C361.08,359.35 364.47,356.57 366.70,354.20 C368.93,351.83 370.32,346.87 371.70,345.00 C373.08,343.13 371.95,343.05 375.00,343.00 C378.05,342.95 384.72,344.08 390.00,344.70 C395.28,345.32 402.25,347.07 406.70,346.70 C411.15,346.33 413.78,343.90 416.70,342.50 C419.62,341.10 421.57,337.88 424.20,338.30 C426.83,338.72 429.87,341.93 432.50,345.00 C435.13,348.07 437.63,356.98 440.00,356.70 C442.37,356.42 444.62,346.92 446.70,343.30 C448.78,339.68 450.83,335.55 452.50,335.00 C454.17,334.45 454.90,338.47 456.70,340.00 C458.50,341.53 461.37,343.65 463.30,344.20 C465.23,344.75 467.47,343.45 468.30,343.30" fill="none" stroke="#2a1c7a" stroke-opacity="0.28" stroke-width="3.4" stroke-linecap="round" stroke-linejoin="round"/><path d="M294.20,319.20 C296.28,321.00 302.40,326.40 306.70,330.00 C311.00,333.60 316.12,338.72 320.00,340.80 C323.88,342.88 325.83,341.38 330.00,342.50 C334.17,343.62 341.67,345.70 345.00,347.50 C348.33,349.30 347.78,351.35 350.00,353.30 C352.22,355.25 355.52,359.05 358.30,359.20 C361.08,359.35 364.47,356.57 366.70,354.20 C368.93,351.83 370.32,346.87 371.70,345.00 C373.08,343.13 371.95,343.05 375.00,343.00 C378.05,342.95 384.72,344.08 390.00,344.70 C395.28,345.32 402.25,347.07 406.70,346.70 C411.15,346.33 413.78,343.90 416.70,342.50 C419.62,341.10 421.57,337.88 424.20,338.30 C426.83,338.72 429.87,341.93 432.50,345.00 C435.13,348.07 437.63,356.98 440.00,356.70 C442.37,356.42 444.62,346.92 446.70,343.30 C448.78,339.68 450.83,335.55 452.50,335.00 C454.17,334.45 454.90,338.47 456.70,340.00 C458.50,341.53 461.37,343.65 463.30,344.20 C465.23,344.75 467.47,343.45 468.30,343.30" fill="none" stroke="#dedce6" stroke-width="1.15" stroke-linecap="round" stroke-linejoin="round"/><path d="M510.20,406.70 C511.42,409.12 514.53,416.92 517.50,421.25 C520.47,425.58 525.22,430.09 528.00,432.70 C530.78,435.31 532.48,435.17 534.20,436.90 C535.92,438.63 536.57,442.17 538.30,443.10 C540.03,444.03 542.17,443.37 544.60,442.50 C547.03,441.63 551.33,443.52 552.90,437.90 C554.47,432.27 553.65,418.82 554.00,408.75 C554.35,398.68 554.50,386.18 555.00,377.50 C555.50,368.82 556.13,362.62 557.00,356.70 C557.87,350.78 558.97,345.65 560.20,342.00 C561.43,338.35 561.10,334.09 564.40,334.80 C567.70,335.51 573.93,342.08 580.00,346.25 C586.07,350.42 595.93,358.06 600.80,359.80 C605.67,361.54 605.90,359.67 609.20,356.70 C612.50,353.73 617.13,343.22 620.60,342.00 C624.07,340.78 626.35,345.57 630.00,349.40 C633.65,353.23 639.03,361.53 642.50,365.00 C645.97,368.47 647.67,370.55 650.80,370.20 C653.92,369.85 657.60,366.72 661.25,362.90 C664.90,359.08 668.19,348.87 672.70,347.30 C677.21,345.73 685.70,352.47 688.30,353.50" fill="none" stroke="#2a1c7a" stroke-opacity="0.28" stroke-width="3.4" stroke-linecap="round" stroke-linejoin="round"/><path d="M510.20,406.70 C511.42,409.12 514.53,416.92 517.50,421.25 C520.47,425.58 525.22,430.09 528.00,432.70 C530.78,435.31 532.48,435.17 534.20,436.90 C535.92,438.63 536.57,442.17 538.30,443.10 C540.03,444.03 542.17,443.37 544.60,442.50 C547.03,441.63 551.33,443.52 552.90,437.90 C554.47,432.27 553.65,418.82 554.00,408.75 C554.35,398.68 554.50,386.18 555.00,377.50 C555.50,368.82 556.13,362.62 557.00,356.70 C557.87,350.78 558.97,345.65 560.20,342.00 C561.43,338.35 561.10,334.09 564.40,334.80 C567.70,335.51 573.93,342.08 580.00,346.25 C586.07,350.42 595.93,358.06 600.80,359.80 C605.67,361.54 605.90,359.67 609.20,356.70 C612.50,353.73 617.13,343.22 620.60,342.00 C624.07,340.78 626.35,345.57 630.00,349.40 C633.65,353.23 639.03,361.53 642.50,365.00 C645.97,368.47 647.67,370.55 650.80,370.20 C653.92,369.85 657.60,366.72 661.25,362.90 C664.90,359.08 668.19,348.87 672.70,347.30 C677.21,345.73 685.70,352.47 688.30,353.50" fill="none" stroke="#dedce6" stroke-width="1.15" stroke-linecap="round" stroke-linejoin="round"/><path d="M754.60,196.90 C757.37,198.75 765.52,204.57 771.20,208.00 C776.88,211.43 782.23,214.73 788.70,217.50 C795.17,220.27 805.00,225.13 810.00,224.60 C815.00,224.07 815.92,217.47 818.70,214.30 C821.48,211.13 823.78,207.57 826.70,205.60 C829.62,203.63 831.85,202.10 836.20,202.50 C840.55,202.90 848.58,207.75 852.80,208.00 C857.02,208.25 858.47,205.05 861.50,204.00 C864.53,202.95 868.50,201.95 871.00,201.70 C873.50,201.45 875.45,202.12 876.50,202.50 C877.55,202.88 877.17,203.75 877.30,204.00" fill="none" stroke="#2a1c7a" stroke-opacity="0.28" stroke-width="3.4" stroke-linecap="round" stroke-linejoin="round"/><path d="M754.60,196.90 C757.37,198.75 765.52,204.57 771.20,208.00 C776.88,211.43 782.23,214.73 788.70,217.50 C795.17,220.27 805.00,225.13 810.00,224.60 C815.00,224.07 815.92,217.47 818.70,214.30 C821.48,211.13 823.78,207.57 826.70,205.60 C829.62,203.63 831.85,202.10 836.20,202.50 C840.55,202.90 848.58,207.75 852.80,208.00 C857.02,208.25 858.47,205.05 861.50,204.00 C864.53,202.95 868.50,201.95 871.00,201.70 C873.50,201.45 875.45,202.12 876.50,202.50 C877.55,202.88 877.17,203.75 877.30,204.00" fill="none" stroke="#dedce6" stroke-width="1.15" stroke-linecap="round" stroke-linejoin="round"/><path d="M878.50,458.50 C879.27,459.05 878.92,461.92 883.10,461.80 C887.28,461.68 897.32,459.68 903.60,457.80 C909.88,455.92 917.38,453.03 920.80,450.50 C924.22,447.97 922.33,446.23 924.10,442.60 C925.87,438.97 930.18,431.02 931.40,428.70" fill="none" stroke="#2a1c7a" stroke-opacity="0.28" stroke-width="3.4" stroke-linecap="round" stroke-linejoin="round"/><path d="M878.50,458.50 C879.27,459.05 878.92,461.92 883.10,461.80 C887.28,461.68 897.32,459.68 903.60,457.80 C909.88,455.92 917.38,453.03 920.80,450.50 C924.22,447.97 922.33,446.23 924.10,442.60 C925.87,438.97 930.18,431.02 931.40,428.70" fill="none" stroke="#dedce6" stroke-width="1.15" stroke-linecap="round" stroke-linejoin="round"/><rect x="925" y="109" width="42" height="25" fill="#181621"/><rect x="957.2" y="134" width="3.2" height="79" rx="1.6" fill="#8f8d98"/><circle cx="958.8" cy="173.5" r="5" fill="#ffffff"/><rect x="954.2" y="458" width="8.6" height="126" rx="4.3" fill="#2a2836"/><rect x="957.6" y="486.5" width="2" height="87.5" rx="1" fill="#8372fb"/><rect x="588" y="706" width="172" height="9" rx="4.5" fill="#33303f"/><rect x="880" y="709" width="79.5" height="3.6" rx="1.8" fill="#a3a1ab"/><circle cx="920.3" cy="710.8" r="5.6" fill="#16141c"/><circle cx="920.3" cy="710.8" r="4.7" fill="#ffffff"/></g></svg>
<div style="position:absolute;left:26.396316000000002px;top:120.86px;font-size:16.4px;line-height:1;font-weight:400;color:#f4f3f7;letter-spacing:0px;white-space:nowrap;transform:scaleX(0.86);transform-origin:0 0;">A</div>
<div style="position:absolute;left:37.4px;top:127.49px;font-size:10.6px;line-height:1;font-weight:400;color:#f4f3f7;letter-spacing:0px;white-space:nowrap;">4</div>
<div style="position:absolute;left:22.713544px;top:166.26px;font-size:16.4px;line-height:1;font-weight:400;color:#f4f3f7;letter-spacing:0px;white-space:nowrap;transform:scaleX(0.86);transform-origin:0 0;">G</div>
<div style="position:absolute;left:41.6px;top:175.73px;font-size:10.2px;line-height:1;font-weight:400;color:#f4f3f7;letter-spacing:0px;white-space:nowrap;">4</div>
<div style="position:absolute;left:25.613544px;top:207.06px;font-size:16.4px;line-height:1;font-weight:400;color:#f4f3f7;letter-spacing:0px;white-space:nowrap;transform:scaleX(0.86);transform-origin:0 0;">G</div>
<div style="position:absolute;left:37.4px;top:213.69px;font-size:10.6px;line-height:1;font-weight:400;color:#f4f3f7;letter-spacing:0px;white-space:nowrap;">4</div>
<div style="position:absolute;left:23.891227999999998px;top:252.46px;font-size:16.4px;line-height:1;font-weight:400;color:#f4f3f7;letter-spacing:0px;white-space:nowrap;transform:scaleX(0.86);transform-origin:0 0;">F</div>
<div style="position:absolute;left:41.6px;top:261.93px;font-size:10.2px;line-height:1;font-weight:400;color:#f4f3f7;letter-spacing:0px;white-space:nowrap;">4</div>
<div style="position:absolute;left:26.791228000000004px;top:293.26px;font-size:16.4px;line-height:1;font-weight:400;color:#f4f3f7;letter-spacing:0px;white-space:nowrap;transform:scaleX(0.86);transform-origin:0 0;">F</div>
<div style="position:absolute;left:37.4px;top:299.89px;font-size:10.6px;line-height:1;font-weight:400;color:#f4f3f7;letter-spacing:0px;white-space:nowrap;">4</div>
<div style="position:absolute;left:26.396316000000002px;top:336.36px;font-size:16.4px;line-height:1;font-weight:400;color:#f4f3f7;letter-spacing:0px;white-space:nowrap;transform:scaleX(0.86);transform-origin:0 0;">E</div>
<div style="position:absolute;left:37.4px;top:342.99px;font-size:10.6px;line-height:1;font-weight:400;color:#f4f3f7;letter-spacing:0px;white-space:nowrap;">4</div>
<div style="position:absolute;left:23.108456px;top:381.76px;font-size:16.4px;line-height:1;font-weight:400;color:#f4f3f7;letter-spacing:0px;white-space:nowrap;transform:scaleX(0.86);transform-origin:0 0;">D</div>
<div style="position:absolute;left:41.6px;top:391.23px;font-size:10.2px;line-height:1;font-weight:400;color:#f4f3f7;letter-spacing:0px;white-space:nowrap;">4</div>
<div style="position:absolute;left:26.008456000000002px;top:422.56px;font-size:16.4px;line-height:1;font-weight:400;color:#f4f3f7;letter-spacing:0px;white-space:nowrap;transform:scaleX(0.86);transform-origin:0 0;">D</div>
<div style="position:absolute;left:37.4px;top:429.19px;font-size:10.6px;line-height:1;font-weight:400;color:#f4f3f7;letter-spacing:0px;white-space:nowrap;">4</div>
<div style="position:absolute;left:23.108456px;top:467.96px;font-size:16.4px;line-height:1;font-weight:400;color:#f4f3f7;letter-spacing:0px;white-space:nowrap;transform:scaleX(0.86);transform-origin:0 0;">C</div>
<div style="position:absolute;left:41.6px;top:477.43px;font-size:10.2px;line-height:1;font-weight:400;color:#f4f3f7;letter-spacing:0px;white-space:nowrap;">4</div>
<div style="position:absolute;left:26.008456000000002px;top:508.76px;font-size:16.4px;line-height:1;font-weight:400;color:#f4f3f7;letter-spacing:0px;white-space:nowrap;transform:scaleX(0.86);transform-origin:0 0;">C</div>
<div style="position:absolute;left:37.4px;top:515.39px;font-size:10.6px;line-height:1;font-weight:400;color:#f4f3f7;letter-spacing:0px;white-space:nowrap;">4</div>
<div style="position:absolute;left:26.396316000000002px;top:551.86px;font-size:16.4px;line-height:1;font-weight:400;color:#f4f3f7;letter-spacing:0px;white-space:nowrap;transform:scaleX(0.86);transform-origin:0 0;">B</div>
<div style="position:absolute;left:37.4px;top:558.49px;font-size:10.6px;line-height:1;font-weight:400;color:#f4f3f7;letter-spacing:0px;white-space:nowrap;">3</div>
<div style="position:absolute;left:23.496316px;top:597.26px;font-size:16.4px;line-height:1;font-weight:400;color:#f4f3f7;letter-spacing:0px;white-space:nowrap;transform:scaleX(0.86);transform-origin:0 0;">A</div>
<div style="position:absolute;left:41.6px;top:606.73px;font-size:10.2px;line-height:1;font-weight:400;color:#f4f3f7;letter-spacing:0px;white-space:nowrap;">3</div>
<div style="position:absolute;left:26.396316000000002px;top:638.06px;font-size:16.4px;line-height:1;font-weight:400;color:#f4f3f7;letter-spacing:0px;white-space:nowrap;transform:scaleX(0.86);transform-origin:0 0;">A</div>
<div style="position:absolute;left:37.4px;top:644.69px;font-size:10.6px;line-height:1;font-weight:400;color:#f4f3f7;letter-spacing:0px;white-space:nowrap;">3</div>
<div style="position:absolute;left:22.713544px;top:683.46px;font-size:16.4px;line-height:1;font-weight:400;color:#f4f3f7;letter-spacing:0px;white-space:nowrap;transform:scaleX(0.86);transform-origin:0 0;">G</div>
<div style="position:absolute;left:41.6px;top:692.93px;font-size:10.2px;line-height:1;font-weight:400;color:#f4f3f7;letter-spacing:0px;white-space:nowrap;">3</div>
<svg width="1200" height="794" viewBox="0 0 1200 794"><path d="M38.9 165.00 V174.80 M41.5 164.40 V174.20" stroke="#f4f3f7" stroke-width="1.1" fill="none"/><path d="M36.9 169.70 L43.4 168.10 M36.9 173.10 L43.4 171.50" stroke="#f4f3f7" stroke-width="1.5" fill="none"/><path d="M38.9 251.20 V261.00 M41.5 250.60 V260.40" stroke="#f4f3f7" stroke-width="1.1" fill="none"/><path d="M36.9 255.90 L43.4 254.30 M36.9 259.30 L43.4 257.70" stroke="#f4f3f7" stroke-width="1.5" fill="none"/><path d="M38.9 380.50 V390.30 M41.5 379.90 V389.70" stroke="#f4f3f7" stroke-width="1.1" fill="none"/><path d="M36.9 385.20 L43.4 383.60 M36.9 388.60 L43.4 387.00" stroke="#f4f3f7" stroke-width="1.5" fill="none"/><path d="M38.9 466.70 V476.50 M41.5 466.10 V475.90" stroke="#f4f3f7" stroke-width="1.1" fill="none"/><path d="M36.9 471.40 L43.4 469.80 M36.9 474.80 L43.4 473.20" stroke="#f4f3f7" stroke-width="1.5" fill="none"/><path d="M38.9 596.00 V605.80 M41.5 595.40 V605.20" stroke="#f4f3f7" stroke-width="1.1" fill="none"/><path d="M36.9 600.70 L43.4 599.10 M36.9 604.10 L43.4 602.50" stroke="#f4f3f7" stroke-width="1.5" fill="none"/><path d="M38.9 682.20 V692.00 M41.5 681.60 V691.40" stroke="#f4f3f7" stroke-width="1.1" fill="none"/><path d="M36.9 686.90 L43.4 685.30 M36.9 690.30 L43.4 688.70" stroke="#f4f3f7" stroke-width="1.5" fill="none"/></svg>
<div style="position:absolute;left:83.60000000000001px;top:64.80px;font-size:14px;line-height:1;font-weight:400;color:#ecebef;letter-spacing:0.12px;white-space:nowrap;">0:00:16.000</div>
<div style="position:absolute;left:309.59999999999997px;top:64.80px;font-size:14px;line-height:1;font-weight:400;color:#ecebef;letter-spacing:0.12px;white-space:nowrap;">0:00:18.000</div>
<div style="position:absolute;left:535.6px;top:64.80px;font-size:14px;line-height:1;font-weight:400;color:#ecebef;letter-spacing:0.12px;white-space:nowrap;">0:00:20.000</div>
<div style="position:absolute;left:763.6px;top:64.80px;font-size:14px;line-height:1;font-weight:400;color:#ecebef;letter-spacing:0.12px;white-space:nowrap;">0:00:22.000</div>
<div style="position:absolute;left:977px;top:57px;width:71px;height:31px;background:#7b68f5;border-radius:7px 0 0 0;"></div>
<div style="position:absolute;left:977px;top:88px;width:213px;height:1px;background:#23212d;"></div>
<div style="position:absolute;left:712.5px;width:600px;text-align:center;top:66.85px;font-size:13px;line-height:1;font-weight:700;color:#ffffff;letter-spacing:0px;white-space:nowrap;">Pitch</div>
<div style="position:absolute;left:783.5px;width:600px;text-align:center;top:66.85px;font-size:13px;line-height:1;font-weight:700;color:#a9a7b1;letter-spacing:0px;white-space:nowrap;">Level</div>
<div style="position:absolute;left:854.5px;width:600px;text-align:center;top:66.85px;font-size:13px;line-height:1;font-weight:700;color:#a9a7b1;letter-spacing:0.4px;white-space:nowrap;">Attack</div>
<div style="position:absolute;left:994.5px;top:108.45px;font-size:13px;line-height:1;font-weight:700;color:#f2f1f5;letter-spacing:0.3px;white-space:nowrap;">TRACKS</div>
<div style="position:absolute;left:1159px;top:114px;width:11px;height:2px;background:#9c9aa4;"></div>
<div style="position:absolute;left:994px;top:136.3px;width:179px;height:30px;background:#302d3f;border:1px solid #7b68f5;border-radius:4px;"></div>
<div style="position:absolute;left:1004.6px;top:143.90px;font-size:14px;line-height:1;font-weight:400;color:#ecebef;letter-spacing:0px;white-space:nowrap;">Lead vocal</div>
<div style="position:absolute;left:994px;top:172.8px;width:179px;height:30px;background:transparent;border:1px solid #3b3947;border-radius:4px;"></div>
<div style="position:absolute;left:1004.6px;top:180.40px;font-size:14px;line-height:1;font-weight:400;color:#ecebef;letter-spacing:0px;white-space:nowrap;">Lead vocal - 1</div>
<div style="position:absolute;left:994px;top:209.2px;width:179px;height:30px;background:transparent;border:1px solid #3b3947;border-radius:4px;"></div>
<div style="position:absolute;left:1004.6px;top:216.80px;font-size:14px;line-height:1;font-weight:400;color:#ecebef;letter-spacing:0px;white-space:nowrap;">Lead vocal - 2</div>
<div style="position:absolute;left:994px;top:255px;width:179px;height:1px;background:#2e2c38;"></div>
<div style="position:absolute;left:994px;top:275.25px;font-size:13px;line-height:1;font-weight:700;color:#f2f1f5;letter-spacing:0.5px;white-space:nowrap;">SCALE</div>
<div style="position:absolute;left:1159px;top:280.5px;width:11px;height:2px;background:#9c9aa4;"></div>
<div style="position:absolute;left:994px;top:303px;width:179px;height:26px;background:#2e2c3a;border-radius:2px;"></div>
<div style="position:absolute;left:1002.3px;top:308.60px;font-size:14px;line-height:1;font-weight:400;color:#ecebef;letter-spacing:0px;white-space:nowrap;">F Harmonic Minor</div>
<div style="position:absolute;left:994px;top:343.10px;font-size:14px;line-height:1;font-weight:400;color:#ecebef;letter-spacing:0px;white-space:nowrap;">Snap to scale notes</div>
<div style="position:absolute;left:1147px;top:343px;width:26px;height:13px;background:#33313e;border-radius:7px;"></div>
<div style="position:absolute;left:994px;top:374px;width:179px;height:1px;background:#2e2c38;"></div>
<div style="position:absolute;left:994px;top:394.15px;font-size:13px;line-height:1;font-weight:700;color:#f2f1f5;letter-spacing:0.6px;white-space:nowrap;">FORMANT SHIFT</div>
<div style="position:absolute;left:1147px;top:394px;width:26px;height:13px;background:#7b68f5;border-radius:7px;"></div>
<div style="position:absolute;left:994px;top:422px;width:179px;height:27.5px;background:#2e2c3a;border-radius:2px;"></div>
<div style="position:absolute;left:1002.3px;top:429.10px;font-size:14px;line-height:1;font-weight:400;color:#ecebef;letter-spacing:0px;white-space:nowrap;">0</div>
<div style="position:absolute;left:1152.5px;top:431.80px;font-size:10px;line-height:1;font-weight:700;color:#9c9aa4;letter-spacing:0.2px;white-space:nowrap;">CT</div>
<div style="position:absolute;left:994px;top:465px;width:179px;height:1px;background:#2e2c38;"></div>
<div style="position:absolute;left:994px;top:745px;width:25px;height:25px;background:#33313e;border-radius:3px;"></div>
<svg width="1200" height="794" viewBox="0 0 1200 794"><g fill="none" stroke="#a9a7b0" stroke-width="2" stroke-linecap="round" stroke-linejoin="round"><path d="M964 16.2 V23.6 H971.2"/><path d="M967.8 31.7 A9.2 9.2 0 1 0 966.8 19.9 L964.4 23.2"/><path d="M1021.8 16.2 V23.6 H1014.6"/><path d="M1018 31.7 A9.2 9.2 0 1 1 1019 19.9 L1021.4 23.2"/><rect x="1062" y="15.6" width="19.5" height="19.2" rx="3"/><path d="M1068.3 15.6 V34.8 M1074.7 15.6 V34.8"/></g><rect x="1041.8" y="12.3" width="1.3" height="25.7" fill="#3d3b47"/><rect x="1101.5" y="12.3" width="1.3" height="25.7" fill="#3d3b47"/><g fill="none" stroke="#ffffff" stroke-width="2.2" stroke-linecap="round"><path d="M1131.5 15.5 V25.5"/><path d="M1125.9 19.9 A8.6 8.6 0 1 0 1137.1 19.9"/></g><polygon points="1174.30,16.42 1174.66,16.43 1175.01,16.47 1175.36,16.55 1175.69,16.75 1175.95,17.21 1176.11,17.95 1176.25,18.57 1176.44,18.90 1176.67,19.08 1176.91,19.20 1177.17,19.29 1177.45,19.32 1177.82,19.22 1178.35,18.88 1179.00,18.47 1179.51,18.33 1179.88,18.42 1180.18,18.61 1180.46,18.84 1180.72,19.08 1180.96,19.34 1181.19,19.62 1181.38,19.92 1181.47,20.29 1181.33,20.80 1180.92,21.45 1180.58,21.98 1180.48,22.35 1180.51,22.63 1180.60,22.89 1180.72,23.13 1180.90,23.36 1181.23,23.55 1181.85,23.69 1182.59,23.85 1183.05,24.11 1183.25,24.44 1183.33,24.79 1183.37,25.14 1183.38,25.50 1183.37,25.86 1183.33,26.21 1183.25,26.56 1183.05,26.89 1182.59,27.15 1181.85,27.31 1181.23,27.45 1180.90,27.64 1180.72,27.87 1180.60,28.11 1180.51,28.37 1180.48,28.65 1180.58,29.02 1180.92,29.55 1181.33,30.20 1181.47,30.71 1181.38,31.08 1181.19,31.38 1180.96,31.66 1180.72,31.92 1180.46,32.16 1180.18,32.39 1179.88,32.58 1179.51,32.67 1179.00,32.53 1178.35,32.12 1177.82,31.78 1177.45,31.68 1177.17,31.71 1176.91,31.80 1176.67,31.92 1176.44,32.10 1176.25,32.43 1176.11,33.05 1175.95,33.79 1175.69,34.25 1175.36,34.45 1175.01,34.53 1174.66,34.57 1174.30,34.58 1173.94,34.57 1173.59,34.53 1173.24,34.45 1172.91,34.25 1172.65,33.79 1172.49,33.05 1172.35,32.43 1172.16,32.10 1171.93,31.92 1171.69,31.80 1171.43,31.71 1171.15,31.68 1170.78,31.78 1170.25,32.12 1169.60,32.53 1169.09,32.67 1168.72,32.58 1168.42,32.39 1168.14,32.16 1167.88,31.92 1167.64,31.66 1167.41,31.38 1167.22,31.08 1167.13,30.71 1167.27,30.20 1167.68,29.55 1168.02,29.02 1168.12,28.65 1168.09,28.37 1168.00,28.11 1167.88,27.87 1167.70,27.64 1167.37,27.45 1166.75,27.31 1166.01,27.15 1165.55,26.89 1165.35,26.56 1165.27,26.21 1165.23,25.86 1165.22,25.50 1165.23,25.14 1165.27,24.79 1165.35,24.44 1165.55,24.11 1166.01,23.85 1166.75,23.69 1167.37,23.55 1167.70,23.36 1167.88,23.13 1168.00,22.89 1168.09,22.63 1168.12,22.35 1168.02,21.98 1167.68,21.45 1167.27,20.80 1167.13,20.29 1167.22,19.92 1167.41,19.62 1167.64,19.34 1167.88,19.08 1168.14,18.84 1168.42,18.61 1168.72,18.42 1169.09,18.33 1169.60,18.47 1170.25,18.88 1170.78,19.22 1171.15,19.32 1171.43,19.29 1171.69,19.20 1171.93,19.08 1172.16,18.90 1172.35,18.57 1172.49,17.95 1172.65,17.21 1172.91,16.75 1173.24,16.55 1173.59,16.47 1173.94,16.43 1174.30,16.42" fill="none" stroke="#a9a7b0" stroke-width="1.85" stroke-linejoin="round"/><circle cx="1174.3" cy="25.5" r="3.4" fill="none" stroke="#a9a7b0" stroke-width="1.85"/><circle cx="840.3" cy="25.3" r="8.8" fill="none" stroke="#2fe08c" stroke-width="2"/><path d="M836.3 25.6 L839.2 28.4 L844.6 22.6" fill="none" stroke="#2fe08c" stroke-width="2" stroke-linecap="round" stroke-linejoin="round"/><path d="M612 21.8 L618.2 28 L624.4 21.8" fill="none" stroke="#a9a7b0" stroke-width="1.5" stroke-linecap="round" stroke-linejoin="round"/><g fill="none" stroke="#a9a7b0" stroke-width="1.5"><circle cx="651.8" cy="21.2" r="2.3"/><path d="M654.1 21.2 H662.6"/><circle cx="659.6" cy="28.9" r="2.3"/><path d="M649 28.9 H657.3"/></g><circle cx="697" cy="25.3" r="4.4" fill="#a09ea8"/><g fill="none" stroke="#a9a7b0" stroke-width="1.5" stroke-linecap="round"><rect x="28.3" y="69.1" width="12.4" height="7.9" rx="1.8"/><path d="M30.9 69.1 V65.9 A3.4 3.4 0 0 1 37.6 65.6"/></g><g fill="none" stroke="#a9a7b0" stroke-width="1.5" stroke-linecap="round" stroke-linejoin="round"><path d="M28.5 97 V95 A3 3 0 0 1 31.5 92 H40"/><path d="M37.8 89.8 L40.2 92 L37.8 94.2"/><path d="M40.5 95 V97 A3 3 0 0 1 37.5 100 H29"/><path d="M31.2 97.8 L28.8 100 L31.2 102.2"/></g><rect x="372.5" y="647" width="264" height="33.3" rx="9" fill="#18161f" stroke="#34323f" stroke-width="1.3"/><rect x="376" y="650.7" width="25.5" height="26" rx="4.5" fill="#7b68f5"/><path d="M382 657.5 L386.8 670.2 L389.6 665.3 L394.8 670.2 L395.6 669.4 L390.6 664.4 L395.4 662.4 Z" fill="none" stroke="#ffffff" stroke-width="1.6" stroke-linejoin="round"/><g fill="none" stroke="#a9a7b0" stroke-width="1.4" stroke-linecap="round" stroke-linejoin="round"><path d="M405.4 662.2 L408.8 665.4 L412.2 662.2"/><path d="M428.3 657.4 L428.6 664.6 Q429 666.6 431 666.4 Q433.6 665.6 435.4 659.2"/><path d="M430.2 666.6 L428.2 669.2"/><circle cx="427.9" cy="669.6" r="1.3" fill="#a9a7b0"/><path d="M455.6 670.6 L456.4 666.4 L465.2 657.6 Q466.6 656.4 468 657.8 L468.6 658.4 Q469.8 659.8 468.4 661.2 L459.6 670 Z"/><path d="M463.4 659.4 L466.6 662.6"/><path d="M484.2 670.8 L486.4 662.6 L491.2 660.2 L495.4 664.4 L493 669.2 Z"/><path d="M491.2 660.2 L494 657.4 L498.2 661.6 L495.4 664.4"/><path d="M484.4 670.6 L488.6 666.4"/><circle cx="489.6" cy="665.4" r="1.4"/><circle cx="516.3" cy="659.8" r="2.2"/><circle cx="516.3" cy="668.4" r="2.2"/><path d="M518.2 667.2 L527.4 657.4 M518.2 661 L521.4 664.2 M523.2 666 L527.4 670.4"/></g><g fill="none" stroke="#a9a7b0" stroke-width="1.3" stroke-linecap="round"><path d="M544.2 666.5 L545.6 659 L546.4 669.6 L547.8 657.6 L548.6 670 L550 658.4 L550.8 669.4 L552.2 659.6 L553 668.4 L554.2 662 L554.8 665.4"/><path d="M556.4 662 L558.2 663.8 L556.4 665.6"/></g><rect x="567.8" y="651" width="1.2" height="25.7" fill="#34323f"/><rect x="614" y="651" width="1.2" height="25.7" fill="#34323f"/><g fill="none" stroke="#a9a7b0" stroke-width="1.5" stroke-linecap="round"><circle cx="584" cy="662.6" r="5.5"/><path d="M588.2 666.8 L592 670.6"/><path d="M601.4 662.4 L604.6 665.6 L607.8 662.4" stroke-width="1.3"/></g><circle cx="623.2" cy="659.6" r="1.3" fill="#d0ced6"/><circle cx="623.2" cy="663.9" r="1.3" fill="#d0ced6"/><circle cx="623.2" cy="668.2" r="1.3" fill="#d0ced6"/><circle cx="627.8" cy="659.6" r="1.3" fill="#d0ced6"/><circle cx="627.8" cy="663.9" r="1.3" fill="#d0ced6"/><circle cx="627.8" cy="668.2" r="1.3" fill="#d0ced6"/><clipPath id="ovclip"><rect x="13" y="728" width="954" height="60" rx="7"/></clipPath><g clip-path="url(#ovclip)"><rect x="66.5" y="730.5" width="920" height="54" rx="4" fill="#16141c" stroke="#3a3845" stroke-width="1"/><clipPath id="ovsel"><rect x="103.7" y="730" width="462.6" height="55.5"/></clipPath><clipPath id="ovout"><path d="M60 720 H103.7 V790 H60 Z M566.3 720 H970 V790 H566.3 Z"/></clipPath><rect x="104.2" y="730.8" width="461.8" height="54.2" rx="3.5" fill="#2c2550" stroke="#7b68f5" stroke-width="1.6"/><rect x="76" y="757.2" width="885" height="1" fill="#53515c"/><g clip-path="url(#ovout)" fill="#6c6a74"><polygon points="106.5,757.1 107.3,756.0 108.1,753.9 108.9,754.0 109.7,753.6 110.5,753.9 111.3,754.4 112.1,754.0 112.9,754.7 113.7,754.4 114.6,754.9 115.4,755.1 116.2,755.0 117.0,754.9 117.8,755.6 118.6,755.8 119.4,755.8 120.2,756.0 121.0,756.6 121.8,757.1 121.8,758.3 121.0,758.8 120.2,759.4 119.4,759.6 118.6,759.6 117.8,759.8 117.0,760.5 116.2,760.4 115.4,760.3 114.6,760.5 113.7,761.0 112.9,760.7 112.1,761.4 111.3,761.0 110.5,761.5 109.7,761.8 108.9,761.4 108.1,761.5 107.3,759.4 106.5,758.3"/><polygon points="124.2,757.1 125.0,754.7 125.8,752.9 126.6,753.2 127.5,753.0 128.3,752.8 129.1,752.2 129.9,751.0 130.7,752.0 131.5,751.1 132.3,751.0 133.2,751.5 134.0,751.2 134.8,752.1 135.6,752.1 136.4,751.8 137.2,750.9 138.0,751.4 138.9,751.6 139.7,751.1 140.5,751.5 141.3,752.0 142.1,751.3 142.9,751.8 143.7,752.8 144.6,752.7 145.4,753.4 146.2,753.8 147.0,757.1 147.0,758.3 146.2,761.6 145.4,762.0 144.6,762.7 143.7,762.6 142.9,763.6 142.1,764.1 141.3,763.4 140.5,763.9 139.7,764.3 138.9,763.8 138.0,764.0 137.2,764.5 136.4,763.6 135.6,763.3 134.8,763.3 134.0,764.2 133.2,763.9 132.3,764.4 131.5,764.3 130.7,763.4 129.9,764.4 129.1,763.2 128.3,762.6 127.5,762.4 126.6,762.2 125.8,762.5 125.0,760.7 124.2,758.3"/><polygon points="153.0,757.1 153.8,756.1 154.6,755.2 155.4,753.6 156.3,751.7 157.1,751.6 157.9,750.5 158.7,751.5 159.5,750.3 160.3,750.2 161.1,750.7 162.0,750.2 162.8,751.4 163.6,750.8 164.4,751.1 165.2,751.2 166.0,751.6 166.8,751.0 167.7,750.9 168.5,751.9 169.3,751.7 170.1,752.9 170.9,751.9 171.7,752.1 172.5,751.7 173.3,752.1 174.2,753.1 175.0,753.1 175.8,752.8 176.6,753.9 177.4,753.5 178.2,754.0 179.0,754.2 179.9,754.4 180.7,753.8 181.5,754.7 182.3,754.8 183.1,754.9 183.9,754.7 184.7,755.6 185.6,755.7 186.4,756.0 187.2,756.4 188.0,757.1 188.0,758.3 187.2,759.0 186.4,759.4 185.6,759.7 184.7,759.8 183.9,760.7 183.1,760.5 182.3,760.6 181.5,760.7 180.7,761.6 179.9,761.0 179.0,761.2 178.2,761.4 177.4,761.9 176.6,761.5 175.8,762.6 175.0,762.3 174.2,762.3 173.3,763.3 172.5,763.7 171.7,763.3 170.9,763.5 170.1,762.5 169.3,763.7 168.5,763.5 167.7,764.5 166.8,764.4 166.0,763.8 165.2,764.2 164.4,764.3 163.6,764.6 162.8,764.0 162.0,765.2 161.1,764.7 160.3,765.2 159.5,765.1 158.7,763.9 157.9,764.9 157.1,763.8 156.3,763.7 155.4,761.8 154.6,760.2 153.8,759.3 153.0,758.3"/><polygon points="213.0,757.1 213.8,757.1 214.6,757.1 215.4,757.1 216.2,756.7 217.0,756.5 217.9,756.6 218.7,756.5 219.5,756.3 220.3,756.2 221.1,755.9 221.9,755.7 222.7,755.8 223.5,755.8 224.3,755.4 225.1,755.3 226.0,755.1 226.8,754.6 227.6,754.7 228.4,754.7 229.2,754.5 230.0,754.3 230.0,761.1 229.2,760.9 228.4,760.7 227.6,760.7 226.8,760.8 226.0,760.3 225.1,760.1 224.3,760.0 223.5,759.6 222.7,759.6 221.9,759.7 221.1,759.5 220.3,759.2 219.5,759.1 218.7,758.9 217.9,758.8 217.0,758.9 216.2,758.7 215.4,758.3 214.6,758.3 213.8,758.3 213.0,758.3"/><polygon points="230.5,757.1 231.3,753.3 232.1,752.5 233.0,751.7 233.8,751.3 234.6,751.7 235.4,751.4 236.3,751.7 237.1,750.4 237.9,751.5 238.7,751.3 239.5,751.0 240.4,751.1 241.2,750.7 242.0,751.3 242.8,751.5 243.7,751.1 244.5,751.2 245.3,750.6 246.1,751.4 247.0,749.5 247.8,750.1 248.6,751.3 249.4,751.2 250.2,751.2 251.1,751.4 251.9,752.2 252.7,751.2 253.5,751.5 254.4,753.0 255.2,753.8 256.0,757.1 256.0,758.3 255.2,761.6 254.4,762.4 253.5,763.9 252.7,764.2 251.9,763.2 251.1,764.0 250.2,764.2 249.4,764.2 248.6,764.1 247.8,765.3 247.0,765.9 246.1,764.0 245.3,764.8 244.5,764.2 243.7,764.3 242.8,763.9 242.0,764.1 241.2,764.7 240.4,764.3 239.5,764.4 238.7,764.1 237.9,763.9 237.1,765.0 236.3,763.7 235.4,764.0 234.6,763.7 233.8,764.1 233.0,763.7 232.1,762.9 231.3,762.1 230.5,758.3"/><polygon points="262.5,757.1 263.3,753.4 264.1,752.6 264.9,750.9 265.7,751.6 266.5,751.5 267.4,749.1 268.2,749.7 269.0,750.4 269.8,749.2 270.6,750.4 271.4,748.9 272.2,747.7 273.0,748.0 273.8,748.4 274.6,749.6 275.4,749.3 276.2,749.8 277.1,748.2 277.9,748.9 278.7,748.2 279.5,749.4 280.3,749.7 281.1,748.1 281.9,747.9 282.7,748.4 283.5,748.8 284.3,749.1 285.1,749.6 286.0,751.1 286.8,750.9 287.6,751.8 288.4,753.0 289.2,753.9 290.0,757.1 290.0,758.3 289.2,761.5 288.4,762.4 287.6,763.6 286.8,764.5 286.0,764.3 285.1,765.8 284.3,766.3 283.5,766.6 282.7,767.0 281.9,767.5 281.1,767.3 280.3,765.7 279.5,766.0 278.7,767.2 277.9,766.5 277.1,767.2 276.2,765.6 275.4,766.1 274.6,765.8 273.8,767.0 273.0,767.4 272.2,767.7 271.4,766.5 270.6,765.0 269.8,766.2 269.0,765.0 268.2,765.7 267.4,766.3 266.5,763.9 265.7,763.8 264.9,764.5 264.1,762.8 263.3,762.0 262.5,758.3"/><polygon points="293.5,757.1 294.3,753.0 295.2,747.9 296.0,749.5 296.9,748.7 297.7,748.9 298.6,749.4 299.4,751.1 300.2,751.7 301.1,752.1 301.9,752.6 302.8,753.0 303.6,752.9 304.5,753.2 305.3,754.1 306.2,755.4 307.0,757.1 307.0,758.3 306.2,760.0 305.3,761.3 304.5,762.2 303.6,762.5 302.8,762.4 301.9,762.8 301.1,763.3 300.2,763.7 299.4,764.3 298.6,766.0 297.7,766.5 296.9,766.7 296.0,765.9 295.2,767.5 294.3,762.4 293.5,758.3"/><polygon points="309.0,757.1 309.8,754.6 310.7,753.1 311.5,752.1 312.3,751.9 313.1,751.6 314.0,751.8 314.8,752.1 315.6,750.8 316.4,751.6 317.3,750.7 318.1,750.3 318.9,751.5 319.8,751.5 320.6,750.4 321.4,750.8 322.2,751.9 323.1,752.0 323.9,752.0 324.7,750.7 325.5,751.2 326.4,752.6 327.2,751.8 328.0,752.0 328.8,753.1 329.7,754.3 330.5,757.1 330.5,758.3 329.7,761.1 328.8,762.3 328.0,763.4 327.2,763.6 326.4,762.8 325.5,764.2 324.7,764.7 323.9,763.4 323.1,763.4 322.2,763.5 321.4,764.6 320.6,765.0 319.8,763.9 318.9,763.9 318.1,765.1 317.3,764.7 316.4,763.8 315.6,764.6 314.8,763.3 314.0,763.6 313.1,763.8 312.3,763.5 311.5,763.3 310.7,762.3 309.8,760.8 309.0,758.3"/><polygon points="330.5,757.1 331.3,755.6 332.1,754.2 332.9,754.1 333.7,753.9 334.5,753.2 335.3,753.6 336.1,752.9 336.9,752.8 337.7,753.5 338.5,753.4 339.3,753.4 340.1,753.5 340.9,753.0 341.8,753.4 342.6,753.2 343.4,753.6 344.2,752.5 345.0,753.3 345.8,753.2 346.6,753.1 347.4,752.8 348.2,753.6 349.0,753.2 349.8,753.9 350.6,754.2 351.4,754.6 352.2,755.6 353.0,757.1 353.0,758.3 352.2,759.8 351.4,760.8 350.6,761.2 349.8,761.5 349.0,762.2 348.2,761.8 347.4,762.6 346.6,762.3 345.8,762.2 345.0,762.1 344.2,762.9 343.4,761.8 342.6,762.2 341.8,762.0 340.9,762.4 340.1,761.9 339.3,762.0 338.5,762.0 337.7,761.9 336.9,762.6 336.1,762.5 335.3,761.8 334.5,762.2 333.7,761.5 332.9,761.3 332.1,761.2 331.3,759.8 330.5,758.3"/><polygon points="356.5,757.1 357.3,755.7 358.1,754.5 358.9,754.7 359.7,754.2 360.5,753.8 361.3,754.0 362.1,754.2 362.9,754.0 363.7,754.0 364.5,753.7 365.3,754.6 366.1,754.3 366.9,755.0 367.7,755.5 368.5,757.1 368.5,758.3 367.7,759.9 366.9,760.4 366.1,761.1 365.3,760.8 364.5,761.7 363.7,761.4 362.9,761.4 362.1,761.2 361.3,761.4 360.5,761.6 359.7,761.2 358.9,760.7 358.1,760.9 357.3,759.7 356.5,758.3"/><polygon points="373.0,757.1 373.8,754.5 374.6,753.6 375.4,752.9 376.2,753.1 377.0,752.6 377.8,752.5 378.6,752.3 379.4,751.9 380.2,752.3 381.0,752.1 381.8,752.2 382.6,751.4 383.4,751.8 384.2,751.5 385.0,751.4 385.8,752.6 386.6,752.1 387.4,751.6 388.2,752.0 389.0,753.3 389.8,753.6 390.6,753.5 391.4,754.4 392.2,754.8 393.0,757.1 393.0,758.3 392.2,760.6 391.4,761.0 390.6,761.9 389.8,761.8 389.0,762.1 388.2,763.4 387.4,763.8 386.6,763.3 385.8,762.8 385.0,764.0 384.2,763.9 383.4,763.6 382.6,764.0 381.8,763.2 381.0,763.3 380.2,763.1 379.4,763.5 378.6,763.1 377.8,762.9 377.0,762.8 376.2,762.3 375.4,762.5 374.6,761.8 373.8,760.9 373.0,758.3"/><polygon points="397.5,757.1 398.0,756.0 398.5,755.7 399.0,755.7 399.5,755.7 400.0,756.0 400.5,757.1 400.5,758.3 400.0,759.4 399.5,759.7 399.0,759.7 398.5,759.7 398.0,759.4 397.5,758.3"/><polygon points="401.0,757.1 401.8,754.3 402.6,753.4 403.5,753.9 404.3,752.7 405.1,752.5 405.9,753.0 406.7,751.6 407.5,751.3 408.4,752.4 409.2,751.0 410.0,751.9 410.8,751.7 411.6,750.8 412.5,751.1 413.3,752.3 414.1,751.8 414.9,751.7 415.7,752.0 416.5,752.3 417.4,752.1 418.2,751.3 419.0,752.6 419.8,751.7 420.6,752.0 421.5,752.9 422.3,752.5 423.1,752.3 423.9,752.7 424.7,753.7 425.5,752.8 426.4,753.6 427.2,754.2 428.0,757.1 428.0,758.3 427.2,761.2 426.4,761.8 425.5,762.6 424.7,761.7 423.9,762.7 423.1,763.1 422.3,762.9 421.5,762.5 420.6,763.4 419.8,763.7 419.0,762.8 418.2,764.1 417.4,763.3 416.5,763.1 415.7,763.4 414.9,763.7 414.1,763.6 413.3,763.1 412.5,764.3 411.6,764.6 410.8,763.7 410.0,763.5 409.2,764.4 408.4,763.0 407.5,764.1 406.7,763.8 405.9,762.4 405.1,762.9 404.3,762.7 403.5,761.5 402.6,762.0 401.8,761.1 401.0,758.3"/><polygon points="464.5,756.4 465.2,753.5 466.0,747.3 466.8,747.7 467.5,751.6 468.2,755.3 469.0,757.1 469.0,758.3 468.2,760.1 467.5,763.8 466.8,767.7 466.0,768.1 465.2,761.9 464.5,759.0"/><polygon points="469.0,757.1 469.8,755.5 470.6,755.1 471.5,754.8 472.3,754.7 473.1,754.7 473.9,754.7 474.7,754.7 475.5,754.8 476.4,755.1 477.2,755.5 478.0,757.1 478.0,758.3 477.2,759.9 476.4,760.3 475.5,760.6 474.7,760.7 473.9,760.7 473.1,760.7 472.3,760.7 471.5,760.6 470.6,760.3 469.8,759.9 469.0,758.3"/><polygon points="479.0,757.1 479.8,754.3 480.6,753.6 481.4,751.9 482.2,752.1 483.0,751.5 483.8,752.5 484.6,752.5 485.4,751.4 486.2,751.9 487.1,752.5 487.9,750.9 488.7,751.5 489.5,751.4 490.3,752.9 491.1,752.0 491.9,753.7 492.7,753.6 493.5,757.1 493.5,758.3 492.7,761.8 491.9,761.7 491.1,763.4 490.3,762.5 489.5,764.0 488.7,763.9 487.9,764.5 487.1,762.9 486.2,763.5 485.4,764.0 484.6,762.9 483.8,762.9 483.0,763.9 482.2,763.3 481.4,763.5 480.6,761.8 479.8,761.1 479.0,758.3"/><polygon points="495.5,757.1 496.4,753.0 497.2,751.3 498.1,751.9 499.0,752.0 499.8,751.2 500.7,751.8 501.5,752.0 502.4,752.1 503.3,752.8 504.1,753.5 505.0,757.1 505.0,758.3 504.1,761.9 503.3,762.6 502.4,763.3 501.5,763.4 500.7,763.6 499.8,764.2 499.0,763.4 498.1,763.5 497.2,764.1 496.4,762.4 495.5,758.3"/><polygon points="512.0,757.1 512.8,752.9 513.6,752.6 514.5,751.6 515.3,751.8 516.1,751.1 517.0,751.5 517.8,750.9 518.6,751.4 519.4,749.8 520.2,750.2 521.1,751.0 521.9,750.4 522.7,749.4 523.5,751.3 524.4,750.1 525.2,751.2 526.0,751.6 526.9,751.7 527.7,753.4 528.5,757.1 528.5,758.3 527.7,762.0 526.9,763.7 526.0,763.8 525.2,764.2 524.4,765.3 523.5,764.1 522.7,766.0 521.9,765.0 521.1,764.4 520.2,765.2 519.4,765.6 518.6,764.0 517.8,764.5 517.0,763.9 516.1,764.3 515.3,763.6 514.5,763.8 513.6,762.8 512.8,762.5 512.0,758.3"/><polygon points="530.5,757.1 531.3,753.4 532.1,753.3 532.9,752.1 533.7,751.9 534.5,752.0 535.3,752.3 536.2,752.4 537.0,752.9 537.8,752.8 538.6,753.2 539.4,752.8 540.2,754.2 541.0,757.1 541.0,758.3 540.2,761.2 539.4,762.6 538.6,762.2 537.8,762.6 537.0,762.5 536.2,763.0 535.3,763.1 534.5,763.4 533.7,763.5 532.9,763.3 532.1,762.1 531.3,762.0 530.5,758.3"/><polygon points="542.0,756.2 542.9,752.5 543.8,747.5 544.6,744.0 545.5,745.1 546.4,748.4 547.2,752.6 548.1,755.6 549.0,757.1 549.0,758.3 548.1,759.8 547.2,762.8 546.4,767.0 545.5,770.3 544.6,771.4 543.8,767.9 542.9,762.9 542.0,759.2"/><polygon points="549.0,757.1 549.8,753.0 550.7,752.6 551.5,753.2 552.3,754.5 553.2,755.6 554.0,757.1 554.0,758.3 553.2,759.8 552.3,760.9 551.5,762.2 550.7,762.8 549.8,762.4 549.0,758.3"/><polygon points="555.0,757.1 555.8,756.2 556.6,755.9 557.4,755.7 558.2,755.7 559.0,755.7 559.8,755.7 560.6,755.7 561.4,755.9 562.2,756.2 563.0,757.1 563.0,758.3 562.2,759.2 561.4,759.5 560.6,759.7 559.8,759.7 559.0,759.7 558.2,759.7 557.4,759.7 556.6,759.5 555.8,759.2 555.0,758.3"/><polygon points="572.3,757.1 573.1,754.2 573.9,753.9 574.7,752.9 575.6,752.4 576.4,752.2 577.2,752.7 578.0,752.2 578.8,753.0 579.6,752.6 580.4,752.9 581.2,752.6 582.1,753.4 582.9,753.9 583.7,754.3 584.5,757.1 584.5,758.3 583.7,761.1 582.9,761.5 582.1,762.0 581.2,762.8 580.4,762.5 579.6,762.8 578.8,762.4 578.0,763.2 577.2,762.7 576.4,763.2 575.6,763.0 574.7,762.5 573.9,761.5 573.1,761.2 572.3,758.3"/><polygon points="588.0,757.1 588.8,754.7 589.6,753.7 590.4,753.4 591.2,753.0 592.0,752.6 592.8,753.3 593.6,753.3 594.4,752.4 595.2,753.6 596.0,752.8 596.8,753.1 597.6,754.2 598.4,753.6 599.2,754.3 600.0,757.1 600.0,758.3 599.2,761.1 598.4,761.8 597.6,761.2 596.8,762.3 596.0,762.6 595.2,761.8 594.4,763.0 593.6,762.1 592.8,762.1 592.0,762.8 591.2,762.4 590.4,762.0 589.6,761.7 588.8,760.7 588.0,758.3"/><polygon points="603.5,755.7 604.3,753.3 605.1,751.2 606.0,746.6 606.8,743.6 607.6,741.0 608.4,742.6 609.2,746.0 610.0,750.6 610.9,753.5 611.7,755.8 612.5,757.0 612.5,758.4 611.7,759.6 610.9,761.9 610.0,764.8 609.2,769.4 608.4,772.8 607.6,774.4 606.8,771.8 606.0,768.8 605.1,764.2 604.3,762.1 603.5,759.7"/><polygon points="613.0,757.1 613.9,755.3 614.8,754.9 615.6,754.7 616.5,754.7 617.4,754.7 618.2,754.9 619.1,755.3 620.0,757.1 620.0,758.3 619.1,760.1 618.2,760.5 617.4,760.7 616.5,760.7 615.6,760.7 614.8,760.5 613.9,760.1 613.0,758.3"/><polygon points="621.0,757.1 621.9,755.7 622.7,755.3 623.6,755.2 624.4,755.2 625.3,755.3 626.1,755.7 627.0,757.1 627.0,758.3 626.1,759.7 625.3,760.1 624.4,760.2 623.6,760.2 622.7,760.1 621.9,759.7 621.0,758.3"/><polygon points="628.0,757.1 628.9,755.2 629.7,754.8 630.6,754.7 631.4,754.7 632.3,754.8 633.1,755.2 634.0,757.1 634.0,758.3 633.1,760.2 632.3,760.6 631.4,760.7 630.6,760.7 629.7,760.6 628.9,760.2 628.0,758.3"/><polygon points="635.0,757.1 635.8,753.5 636.6,752.3 637.4,751.2 638.2,751.3 639.0,749.2 639.9,749.5 640.7,749.1 641.5,749.1 642.3,749.0 643.1,749.4 643.9,750.7 644.7,748.7 645.5,748.8 646.3,749.4 647.1,749.5 648.0,749.6 648.8,751.3 649.6,750.4 650.4,752.1 651.2,753.4 652.0,757.1 652.0,758.3 651.2,762.0 650.4,763.3 649.6,765.0 648.8,764.1 648.0,765.8 647.1,765.9 646.3,766.0 645.5,766.6 644.7,766.7 643.9,764.7 643.1,766.0 642.3,766.4 641.5,766.3 640.7,766.3 639.9,765.9 639.0,766.2 638.2,764.1 637.4,764.2 636.6,763.1 635.8,761.9 635.0,758.3"/><polygon points="653.0,756.5 653.9,754.5 654.7,750.2 655.6,747.2 656.4,749.8 657.3,753.4 658.1,756.0 659.0,757.1 659.0,758.3 658.1,759.4 657.3,762.0 656.4,765.6 655.6,768.2 654.7,765.2 653.9,760.9 653.0,758.9"/><polygon points="659.0,757.1 659.9,751.7 660.8,750.4 661.6,751.3 662.5,751.1 663.4,750.9 664.2,750.2 665.1,752.3 666.0,757.1 666.0,758.3 665.1,763.1 664.2,765.2 663.4,764.5 662.5,764.3 661.6,764.1 660.8,765.0 659.9,763.7 659.0,758.3"/><polygon points="672.0,757.1 672.8,755.7 673.6,755.1 674.4,754.4 675.2,754.1 676.1,753.9 676.9,754.2 677.7,753.8 678.5,753.7 679.3,753.6 680.1,754.0 680.9,753.1 681.8,753.9 682.6,753.0 683.4,753.0 684.2,754.2 685.0,753.6 685.8,753.2 686.6,753.0 687.4,753.6 688.2,753.9 689.1,754.1 689.9,753.4 690.7,754.4 691.5,754.2 692.3,754.9 693.1,754.9 693.9,755.1 694.8,757.1 694.8,758.3 693.9,760.3 693.1,760.5 692.3,760.5 691.5,761.2 690.7,761.0 689.9,762.0 689.1,761.3 688.2,761.5 687.4,761.8 686.6,762.4 685.8,762.2 685.0,761.8 684.2,761.2 683.4,762.4 682.6,762.4 681.8,761.5 680.9,762.3 680.1,761.4 679.3,761.8 678.5,761.7 677.7,761.6 676.9,761.2 676.1,761.5 675.2,761.3 674.4,761.0 673.6,760.3 672.8,759.7 672.0,758.3"/><polygon points="710.5,757.1 711.3,750.1 712.1,747.4 713.0,746.7 713.8,747.5 714.6,744.5 715.4,745.8 716.3,747.5 717.1,747.5 717.9,745.8 718.7,745.9 719.6,746.5 720.4,747.2 721.2,747.1 722.0,747.9 722.9,747.5 723.7,751.3 724.5,757.1 724.5,758.3 723.7,764.1 722.9,767.9 722.0,767.5 721.2,768.3 720.4,768.2 719.6,768.9 718.7,769.5 717.9,769.6 717.1,767.9 716.3,767.9 715.4,769.6 714.6,770.9 713.8,767.9 713.0,768.7 712.1,768.0 711.3,765.3 710.5,758.3"/><polygon points="726.0,755.7 726.8,754.6 727.7,750.9 728.5,748.1 729.4,744.3 730.2,744.5 731.1,743.6 731.9,744.6 732.8,744.9 733.6,749.4 734.5,752.7 735.3,754.8 736.2,756.3 737.0,757.1 737.0,758.3 736.2,759.1 735.3,760.6 734.5,762.7 733.6,766.0 732.8,770.5 731.9,770.8 731.1,771.8 730.2,770.9 729.4,771.1 728.5,767.3 727.7,764.5 726.8,760.8 726.0,759.7"/><polygon points="735.0,757.1 735.8,752.7 736.7,752.5 737.5,750.6 738.3,751.4 739.2,751.1 740.0,750.3 740.8,751.0 741.7,750.6 742.5,749.3 743.3,749.5 744.2,749.6 745.0,750.0 745.8,749.7 746.7,750.0 747.5,751.3 748.3,751.7 749.2,753.8 750.0,757.1 750.0,758.3 749.2,761.6 748.3,763.7 747.5,764.1 746.7,765.4 745.8,765.7 745.0,765.4 744.2,765.8 743.3,765.9 742.5,766.1 741.7,764.8 740.8,764.4 740.0,765.1 739.2,764.3 738.3,764.0 737.5,764.8 736.7,762.9 735.8,762.7 735.0,758.3"/><polygon points="757.8,757.1 758.6,754.2 759.4,753.5 760.2,753.5 761.0,753.5 761.8,751.8 762.6,752.9 763.4,752.1 764.2,752.1 765.1,752.1 765.9,751.3 766.7,750.9 767.5,752.2 768.3,751.4 769.1,752.1 769.9,751.6 770.8,751.9 771.6,752.3 772.4,752.3 773.2,752.3 774.0,751.1 774.8,752.0 775.6,752.7 776.4,751.9 777.2,752.1 778.1,753.3 778.9,754.1 779.7,754.7 780.5,757.1 780.5,758.3 779.7,760.7 778.9,761.3 778.1,762.1 777.2,763.3 776.4,763.5 775.6,762.7 774.8,763.4 774.0,764.3 773.2,763.1 772.4,763.1 771.6,763.1 770.8,763.5 769.9,763.8 769.1,763.3 768.3,764.0 767.5,763.2 766.7,764.5 765.9,764.1 765.1,763.3 764.2,763.3 763.4,763.3 762.6,762.5 761.8,763.6 761.0,761.9 760.2,761.9 759.4,761.9 758.6,761.2 757.8,758.3"/><polygon points="784.0,757.1 784.8,754.4 785.6,753.5 786.4,753.0 787.2,752.1 788.0,751.5 788.8,751.8 789.7,752.3 790.5,752.3 791.3,752.2 792.1,752.8 792.9,753.3 793.7,754.4 794.5,757.1 794.5,758.3 793.7,761.0 792.9,762.1 792.1,762.6 791.3,763.2 790.5,763.1 789.7,763.1 788.8,763.6 788.0,763.9 787.2,763.3 786.4,762.4 785.6,761.9 784.8,761.0 784.0,758.3"/><polygon points="798.0,757.1 798.8,756.9 799.6,755.9 800.4,754.9 801.2,753.7 802.0,753.8 802.8,753.8 803.7,753.9 804.5,753.7 805.3,753.7 806.1,753.2 806.9,753.4 807.7,753.4 808.5,754.5 809.3,754.5 810.1,753.9 810.9,753.7 811.7,754.3 812.5,754.2 813.3,754.9 814.2,754.6 815.0,754.2 815.8,754.4 816.6,754.4 817.4,754.4 818.2,755.2 819.0,755.4 819.8,755.4 820.6,755.2 821.4,755.2 822.2,755.2 823.0,755.5 823.8,755.7 824.7,755.8 825.5,756.1 826.3,756.2 827.1,756.6 827.9,756.6 828.7,757.0 829.5,757.1 829.5,758.3 828.7,758.4 827.9,758.8 827.1,758.8 826.3,759.2 825.5,759.3 824.7,759.6 823.8,759.7 823.0,759.9 822.2,760.2 821.4,760.2 820.6,760.2 819.8,760.0 819.0,760.0 818.2,760.2 817.4,761.0 816.6,761.0 815.8,761.0 815.0,761.2 814.2,760.8 813.3,760.5 812.5,761.2 811.7,761.1 810.9,761.7 810.1,761.5 809.3,760.9 808.5,760.9 807.7,762.0 806.9,762.0 806.1,762.2 805.3,761.7 804.5,761.7 803.7,761.5 802.8,761.6 802.0,761.6 801.2,761.7 800.4,760.5 799.6,759.5 798.8,758.5 798.0,758.3"/><polygon points="850.5,756.7 851.4,755.7 852.3,754.3 853.1,752.3 854.0,750.2 854.9,750.1 855.8,752.5 856.7,754.3 857.5,755.6 858.4,756.8 859.3,757.1 859.3,758.3 858.4,758.6 857.5,759.8 856.7,761.1 855.8,762.9 854.9,765.3 854.0,765.2 853.1,763.1 852.3,761.1 851.4,759.7 850.5,758.7"/><polygon points="868.0,757.1 868.8,753.8 869.6,753.8 870.4,752.8 871.2,752.1 872.1,750.9 872.9,751.1 873.7,750.4 874.5,751.0 875.3,751.4 876.1,751.3 876.9,749.8 877.8,750.4 878.6,751.2 879.4,751.8 880.2,750.8 881.0,750.4 881.8,751.0 882.6,751.3 883.4,750.5 884.2,750.1 885.1,751.7 885.9,752.3 886.7,752.0 887.5,752.2 888.3,752.2 889.1,753.5 889.9,753.6 890.8,757.1 890.8,758.3 889.9,761.8 889.1,761.9 888.3,763.2 887.5,763.2 886.7,763.4 885.9,763.1 885.1,763.7 884.2,765.3 883.4,764.9 882.6,764.1 881.8,764.4 881.0,765.0 880.2,764.6 879.4,763.6 878.6,764.2 877.8,765.0 876.9,765.6 876.1,764.1 875.3,764.0 874.5,764.4 873.7,765.0 872.9,764.3 872.1,764.5 871.2,763.3 870.4,762.6 869.6,761.6 868.8,761.6 868.0,758.3"/><polygon points="899.5,757.1 900.3,753.6 901.1,751.4 901.9,751.9 902.7,750.3 903.5,751.1 904.3,750.8 905.1,749.3 905.9,750.1 906.7,748.2 907.5,749.2 908.3,749.8 909.1,749.7 909.9,749.2 910.7,748.5 911.5,747.8 912.3,749.9 913.1,749.2 913.9,749.7 914.7,747.7 915.5,749.9 916.3,750.2 917.1,750.1 917.9,749.2 918.7,748.0 919.5,748.2 920.3,748.8 921.1,748.4 921.9,748.8 922.7,750.6 923.5,751.2 924.3,750.1 925.1,751.1 925.9,753.0 926.7,753.0 927.5,757.1 927.5,758.3 926.7,762.4 925.9,762.4 925.1,764.3 924.3,765.3 923.5,764.2 922.7,764.8 921.9,766.6 921.1,767.0 920.3,766.6 919.5,767.2 918.7,767.4 917.9,766.2 917.1,765.3 916.3,765.2 915.5,765.5 914.7,767.7 913.9,765.7 913.1,766.2 912.3,765.5 911.5,767.6 910.7,766.9 909.9,766.2 909.1,765.7 908.3,765.6 907.5,766.2 906.7,767.2 905.9,765.3 905.1,766.1 904.3,764.6 903.5,764.3 902.7,765.1 901.9,763.5 901.1,764.0 900.3,761.8 899.5,758.3"/><polygon points="959.0,757.1 959.8,757.1 960.6,756.8 961.4,756.5 962.2,756.1 963.0,755.7 963.8,754.9 964.6,755.3 965.4,754.2 966.2,754.6 967.0,754.2 967.0,761.2 966.2,760.8 965.4,761.2 964.6,760.1 963.8,760.5 963.0,759.7 962.2,759.3 961.4,758.9 960.6,758.6 959.8,758.3 959.0,758.3"/></g><g clip-path="url(#ovsel)" fill="#6e6a8e"><polygon points="106.5,757.1 107.3,756.0 108.1,753.9 108.9,754.0 109.7,753.6 110.5,753.9 111.3,754.4 112.1,754.0 112.9,754.7 113.7,754.4 114.6,754.9 115.4,755.1 116.2,755.0 117.0,754.9 117.8,755.6 118.6,755.8 119.4,755.8 120.2,756.0 121.0,756.6 121.8,757.1 121.8,758.3 121.0,758.8 120.2,759.4 119.4,759.6 118.6,759.6 117.8,759.8 117.0,760.5 116.2,760.4 115.4,760.3 114.6,760.5 113.7,761.0 112.9,760.7 112.1,761.4 111.3,761.0 110.5,761.5 109.7,761.8 108.9,761.4 108.1,761.5 107.3,759.4 106.5,758.3"/><polygon points="124.2,757.1 125.0,754.7 125.8,752.9 126.6,753.2 127.5,753.0 128.3,752.8 129.1,752.2 129.9,751.0 130.7,752.0 131.5,751.1 132.3,751.0 133.2,751.5 134.0,751.2 134.8,752.1 135.6,752.1 136.4,751.8 137.2,750.9 138.0,751.4 138.9,751.6 139.7,751.1 140.5,751.5 141.3,752.0 142.1,751.3 142.9,751.8 143.7,752.8 144.6,752.7 145.4,753.4 146.2,753.8 147.0,757.1 147.0,758.3 146.2,761.6 145.4,762.0 144.6,762.7 143.7,762.6 142.9,763.6 142.1,764.1 141.3,763.4 140.5,763.9 139.7,764.3 138.9,763.8 138.0,764.0 137.2,764.5 136.4,763.6 135.6,763.3 134.8,763.3 134.0,764.2 133.2,763.9 132.3,764.4 131.5,764.3 130.7,763.4 129.9,764.4 129.1,763.2 128.3,762.6 127.5,762.4 126.6,762.2 125.8,762.5 125.0,760.7 124.2,758.3"/><polygon points="153.0,757.1 153.8,756.1 154.6,755.2 155.4,753.6 156.3,751.7 157.1,751.6 157.9,750.5 158.7,751.5 159.5,750.3 160.3,750.2 161.1,750.7 162.0,750.2 162.8,751.4 163.6,750.8 164.4,751.1 165.2,751.2 166.0,751.6 166.8,751.0 167.7,750.9 168.5,751.9 169.3,751.7 170.1,752.9 170.9,751.9 171.7,752.1 172.5,751.7 173.3,752.1 174.2,753.1 175.0,753.1 175.8,752.8 176.6,753.9 177.4,753.5 178.2,754.0 179.0,754.2 179.9,754.4 180.7,753.8 181.5,754.7 182.3,754.8 183.1,754.9 183.9,754.7 184.7,755.6 185.6,755.7 186.4,756.0 187.2,756.4 188.0,757.1 188.0,758.3 187.2,759.0 186.4,759.4 185.6,759.7 184.7,759.8 183.9,760.7 183.1,760.5 182.3,760.6 181.5,760.7 180.7,761.6 179.9,761.0 179.0,761.2 178.2,761.4 177.4,761.9 176.6,761.5 175.8,762.6 175.0,762.3 174.2,762.3 173.3,763.3 172.5,763.7 171.7,763.3 170.9,763.5 170.1,762.5 169.3,763.7 168.5,763.5 167.7,764.5 166.8,764.4 166.0,763.8 165.2,764.2 164.4,764.3 163.6,764.6 162.8,764.0 162.0,765.2 161.1,764.7 160.3,765.2 159.5,765.1 158.7,763.9 157.9,764.9 157.1,763.8 156.3,763.7 155.4,761.8 154.6,760.2 153.8,759.3 153.0,758.3"/><polygon points="213.0,757.1 213.8,757.1 214.6,757.1 215.4,757.1 216.2,756.7 217.0,756.5 217.9,756.6 218.7,756.5 219.5,756.3 220.3,756.2 221.1,755.9 221.9,755.7 222.7,755.8 223.5,755.8 224.3,755.4 225.1,755.3 226.0,755.1 226.8,754.6 227.6,754.7 228.4,754.7 229.2,754.5 230.0,754.3 230.0,761.1 229.2,760.9 228.4,760.7 227.6,760.7 226.8,760.8 226.0,760.3 225.1,760.1 224.3,760.0 223.5,759.6 222.7,759.6 221.9,759.7 221.1,759.5 220.3,759.2 219.5,759.1 218.7,758.9 217.9,758.8 217.0,758.9 216.2,758.7 215.4,758.3 214.6,758.3 213.8,758.3 213.0,758.3"/><polygon points="230.5,757.1 231.3,753.3 232.1,752.5 233.0,751.7 233.8,751.3 234.6,751.7 235.4,751.4 236.3,751.7 237.1,750.4 237.9,751.5 238.7,751.3 239.5,751.0 240.4,751.1 241.2,750.7 242.0,751.3 242.8,751.5 243.7,751.1 244.5,751.2 245.3,750.6 246.1,751.4 247.0,749.5 247.8,750.1 248.6,751.3 249.4,751.2 250.2,751.2 251.1,751.4 251.9,752.2 252.7,751.2 253.5,751.5 254.4,753.0 255.2,753.8 256.0,757.1 256.0,758.3 255.2,761.6 254.4,762.4 253.5,763.9 252.7,764.2 251.9,763.2 251.1,764.0 250.2,764.2 249.4,764.2 248.6,764.1 247.8,765.3 247.0,765.9 246.1,764.0 245.3,764.8 244.5,764.2 243.7,764.3 242.8,763.9 242.0,764.1 241.2,764.7 240.4,764.3 239.5,764.4 238.7,764.1 237.9,763.9 237.1,765.0 236.3,763.7 235.4,764.0 234.6,763.7 233.8,764.1 233.0,763.7 232.1,762.9 231.3,762.1 230.5,758.3"/><polygon points="262.5,757.1 263.3,753.4 264.1,752.6 264.9,750.9 265.7,751.6 266.5,751.5 267.4,749.1 268.2,749.7 269.0,750.4 269.8,749.2 270.6,750.4 271.4,748.9 272.2,747.7 273.0,748.0 273.8,748.4 274.6,749.6 275.4,749.3 276.2,749.8 277.1,748.2 277.9,748.9 278.7,748.2 279.5,749.4 280.3,749.7 281.1,748.1 281.9,747.9 282.7,748.4 283.5,748.8 284.3,749.1 285.1,749.6 286.0,751.1 286.8,750.9 287.6,751.8 288.4,753.0 289.2,753.9 290.0,757.1 290.0,758.3 289.2,761.5 288.4,762.4 287.6,763.6 286.8,764.5 286.0,764.3 285.1,765.8 284.3,766.3 283.5,766.6 282.7,767.0 281.9,767.5 281.1,767.3 280.3,765.7 279.5,766.0 278.7,767.2 277.9,766.5 277.1,767.2 276.2,765.6 275.4,766.1 274.6,765.8 273.8,767.0 273.0,767.4 272.2,767.7 271.4,766.5 270.6,765.0 269.8,766.2 269.0,765.0 268.2,765.7 267.4,766.3 266.5,763.9 265.7,763.8 264.9,764.5 264.1,762.8 263.3,762.0 262.5,758.3"/><polygon points="293.5,757.1 294.3,753.0 295.2,747.9 296.0,749.5 296.9,748.7 297.7,748.9 298.6,749.4 299.4,751.1 300.2,751.7 301.1,752.1 301.9,752.6 302.8,753.0 303.6,752.9 304.5,753.2 305.3,754.1 306.2,755.4 307.0,757.1 307.0,758.3 306.2,760.0 305.3,761.3 304.5,762.2 303.6,762.5 302.8,762.4 301.9,762.8 301.1,763.3 300.2,763.7 299.4,764.3 298.6,766.0 297.7,766.5 296.9,766.7 296.0,765.9 295.2,767.5 294.3,762.4 293.5,758.3"/><polygon points="309.0,757.1 309.8,754.6 310.7,753.1 311.5,752.1 312.3,751.9 313.1,751.6 314.0,751.8 314.8,752.1 315.6,750.8 316.4,751.6 317.3,750.7 318.1,750.3 318.9,751.5 319.8,751.5 320.6,750.4 321.4,750.8 322.2,751.9 323.1,752.0 323.9,752.0 324.7,750.7 325.5,751.2 326.4,752.6 327.2,751.8 328.0,752.0 328.8,753.1 329.7,754.3 330.5,757.1 330.5,758.3 329.7,761.1 328.8,762.3 328.0,763.4 327.2,763.6 326.4,762.8 325.5,764.2 324.7,764.7 323.9,763.4 323.1,763.4 322.2,763.5 321.4,764.6 320.6,765.0 319.8,763.9 318.9,763.9 318.1,765.1 317.3,764.7 316.4,763.8 315.6,764.6 314.8,763.3 314.0,763.6 313.1,763.8 312.3,763.5 311.5,763.3 310.7,762.3 309.8,760.8 309.0,758.3"/><polygon points="330.5,757.1 331.3,755.6 332.1,754.2 332.9,754.1 333.7,753.9 334.5,753.2 335.3,753.6 336.1,752.9 336.9,752.8 337.7,753.5 338.5,753.4 339.3,753.4 340.1,753.5 340.9,753.0 341.8,753.4 342.6,753.2 343.4,753.6 344.2,752.5 345.0,753.3 345.8,753.2 346.6,753.1 347.4,752.8 348.2,753.6 349.0,753.2 349.8,753.9 350.6,754.2 351.4,754.6 352.2,755.6 353.0,757.1 353.0,758.3 352.2,759.8 351.4,760.8 350.6,761.2 349.8,761.5 349.0,762.2 348.2,761.8 347.4,762.6 346.6,762.3 345.8,762.2 345.0,762.1 344.2,762.9 343.4,761.8 342.6,762.2 341.8,762.0 340.9,762.4 340.1,761.9 339.3,762.0 338.5,762.0 337.7,761.9 336.9,762.6 336.1,762.5 335.3,761.8 334.5,762.2 333.7,761.5 332.9,761.3 332.1,761.2 331.3,759.8 330.5,758.3"/><polygon points="356.5,757.1 357.3,755.7 358.1,754.5 358.9,754.7 359.7,754.2 360.5,753.8 361.3,754.0 362.1,754.2 362.9,754.0 363.7,754.0 364.5,753.7 365.3,754.6 366.1,754.3 366.9,755.0 367.7,755.5 368.5,757.1 368.5,758.3 367.7,759.9 366.9,760.4 366.1,761.1 365.3,760.8 364.5,761.7 363.7,761.4 362.9,761.4 362.1,761.2 361.3,761.4 360.5,761.6 359.7,761.2 358.9,760.7 358.1,760.9 357.3,759.7 356.5,758.3"/><polygon points="373.0,757.1 373.8,754.5 374.6,753.6 375.4,752.9 376.2,753.1 377.0,752.6 377.8,752.5 378.6,752.3 379.4,751.9 380.2,752.3 381.0,752.1 381.8,752.2 382.6,751.4 383.4,751.8 384.2,751.5 385.0,751.4 385.8,752.6 386.6,752.1 387.4,751.6 388.2,752.0 389.0,753.3 389.8,753.6 390.6,753.5 391.4,754.4 392.2,754.8 393.0,757.1 393.0,758.3 392.2,760.6 391.4,761.0 390.6,761.9 389.8,761.8 389.0,762.1 388.2,763.4 387.4,763.8 386.6,763.3 385.8,762.8 385.0,764.0 384.2,763.9 383.4,763.6 382.6,764.0 381.8,763.2 381.0,763.3 380.2,763.1 379.4,763.5 378.6,763.1 377.8,762.9 377.0,762.8 376.2,762.3 375.4,762.5 374.6,761.8 373.8,760.9 373.0,758.3"/><polygon points="397.5,757.1 398.0,756.0 398.5,755.7 399.0,755.7 399.5,755.7 400.0,756.0 400.5,757.1 400.5,758.3 400.0,759.4 399.5,759.7 399.0,759.7 398.5,759.7 398.0,759.4 397.5,758.3"/><polygon points="401.0,757.1 401.8,754.3 402.6,753.4 403.5,753.9 404.3,752.7 405.1,752.5 405.9,753.0 406.7,751.6 407.5,751.3 408.4,752.4 409.2,751.0 410.0,751.9 410.8,751.7 411.6,750.8 412.5,751.1 413.3,752.3 414.1,751.8 414.9,751.7 415.7,752.0 416.5,752.3 417.4,752.1 418.2,751.3 419.0,752.6 419.8,751.7 420.6,752.0 421.5,752.9 422.3,752.5 423.1,752.3 423.9,752.7 424.7,753.7 425.5,752.8 426.4,753.6 427.2,754.2 428.0,757.1 428.0,758.3 427.2,761.2 426.4,761.8 425.5,762.6 424.7,761.7 423.9,762.7 423.1,763.1 422.3,762.9 421.5,762.5 420.6,763.4 419.8,763.7 419.0,762.8 418.2,764.1 417.4,763.3 416.5,763.1 415.7,763.4 414.9,763.7 414.1,763.6 413.3,763.1 412.5,764.3 411.6,764.6 410.8,763.7 410.0,763.5 409.2,764.4 408.4,763.0 407.5,764.1 406.7,763.8 405.9,762.4 405.1,762.9 404.3,762.7 403.5,761.5 402.6,762.0 401.8,761.1 401.0,758.3"/><polygon points="464.5,756.4 465.2,753.5 466.0,747.3 466.8,747.7 467.5,751.6 468.2,755.3 469.0,757.1 469.0,758.3 468.2,760.1 467.5,763.8 466.8,767.7 466.0,768.1 465.2,761.9 464.5,759.0"/><polygon points="469.0,757.1 469.8,755.5 470.6,755.1 471.5,754.8 472.3,754.7 473.1,754.7 473.9,754.7 474.7,754.7 475.5,754.8 476.4,755.1 477.2,755.5 478.0,757.1 478.0,758.3 477.2,759.9 476.4,760.3 475.5,760.6 474.7,760.7 473.9,760.7 473.1,760.7 472.3,760.7 471.5,760.6 470.6,760.3 469.8,759.9 469.0,758.3"/><polygon points="479.0,757.1 479.8,754.3 480.6,753.6 481.4,751.9 482.2,752.1 483.0,751.5 483.8,752.5 484.6,752.5 485.4,751.4 486.2,751.9 487.1,752.5 487.9,750.9 488.7,751.5 489.5,751.4 490.3,752.9 491.1,752.0 491.9,753.7 492.7,753.6 493.5,757.1 493.5,758.3 492.7,761.8 491.9,761.7 491.1,763.4 490.3,762.5 489.5,764.0 488.7,763.9 487.9,764.5 487.1,762.9 486.2,763.5 485.4,764.0 484.6,762.9 483.8,762.9 483.0,763.9 482.2,763.3 481.4,763.5 480.6,761.8 479.8,761.1 479.0,758.3"/><polygon points="495.5,757.1 496.4,753.0 497.2,751.3 498.1,751.9 499.0,752.0 499.8,751.2 500.7,751.8 501.5,752.0 502.4,752.1 503.3,752.8 504.1,753.5 505.0,757.1 505.0,758.3 504.1,761.9 503.3,762.6 502.4,763.3 501.5,763.4 500.7,763.6 499.8,764.2 499.0,763.4 498.1,763.5 497.2,764.1 496.4,762.4 495.5,758.3"/><polygon points="512.0,757.1 512.8,752.9 513.6,752.6 514.5,751.6 515.3,751.8 516.1,751.1 517.0,751.5 517.8,750.9 518.6,751.4 519.4,749.8 520.2,750.2 521.1,751.0 521.9,750.4 522.7,749.4 523.5,751.3 524.4,750.1 525.2,751.2 526.0,751.6 526.9,751.7 527.7,753.4 528.5,757.1 528.5,758.3 527.7,762.0 526.9,763.7 526.0,763.8 525.2,764.2 524.4,765.3 523.5,764.1 522.7,766.0 521.9,765.0 521.1,764.4 520.2,765.2 519.4,765.6 518.6,764.0 517.8,764.5 517.0,763.9 516.1,764.3 515.3,763.6 514.5,763.8 513.6,762.8 512.8,762.5 512.0,758.3"/><polygon points="530.5,757.1 531.3,753.4 532.1,753.3 532.9,752.1 533.7,751.9 534.5,752.0 535.3,752.3 536.2,752.4 537.0,752.9 537.8,752.8 538.6,753.2 539.4,752.8 540.2,754.2 541.0,757.1 541.0,758.3 540.2,761.2 539.4,762.6 538.6,762.2 537.8,762.6 537.0,762.5 536.2,763.0 535.3,763.1 534.5,763.4 533.7,763.5 532.9,763.3 532.1,762.1 531.3,762.0 530.5,758.3"/><polygon points="542.0,756.2 542.9,752.5 543.8,747.5 544.6,744.0 545.5,745.1 546.4,748.4 547.2,752.6 548.1,755.6 549.0,757.1 549.0,758.3 548.1,759.8 547.2,762.8 546.4,767.0 545.5,770.3 544.6,771.4 543.8,767.9 542.9,762.9 542.0,759.2"/><polygon points="549.0,757.1 549.8,753.0 550.7,752.6 551.5,753.2 552.3,754.5 553.2,755.6 554.0,757.1 554.0,758.3 553.2,759.8 552.3,760.9 551.5,762.2 550.7,762.8 549.8,762.4 549.0,758.3"/><polygon points="555.0,757.1 555.8,756.2 556.6,755.9 557.4,755.7 558.2,755.7 559.0,755.7 559.8,755.7 560.6,755.7 561.4,755.9 562.2,756.2 563.0,757.1 563.0,758.3 562.2,759.2 561.4,759.5 560.6,759.7 559.8,759.7 559.0,759.7 558.2,759.7 557.4,759.7 556.6,759.5 555.8,759.2 555.0,758.3"/><polygon points="572.3,757.1 573.1,754.2 573.9,753.9 574.7,752.9 575.6,752.4 576.4,752.2 577.2,752.7 578.0,752.2 578.8,753.0 579.6,752.6 580.4,752.9 581.2,752.6 582.1,753.4 582.9,753.9 583.7,754.3 584.5,757.1 584.5,758.3 583.7,761.1 582.9,761.5 582.1,762.0 581.2,762.8 580.4,762.5 579.6,762.8 578.8,762.4 578.0,763.2 577.2,762.7 576.4,763.2 575.6,763.0 574.7,762.5 573.9,761.5 573.1,761.2 572.3,758.3"/><polygon points="588.0,757.1 588.8,754.7 589.6,753.7 590.4,753.4 591.2,753.0 592.0,752.6 592.8,753.3 593.6,753.3 594.4,752.4 595.2,753.6 596.0,752.8 596.8,753.1 597.6,754.2 598.4,753.6 599.2,754.3 600.0,757.1 600.0,758.3 599.2,761.1 598.4,761.8 597.6,761.2 596.8,762.3 596.0,762.6 595.2,761.8 594.4,763.0 593.6,762.1 592.8,762.1 592.0,762.8 591.2,762.4 590.4,762.0 589.6,761.7 588.8,760.7 588.0,758.3"/><polygon points="603.5,755.7 604.3,753.3 605.1,751.2 606.0,746.6 606.8,743.6 607.6,741.0 608.4,742.6 609.2,746.0 610.0,750.6 610.9,753.5 611.7,755.8 612.5,757.0 612.5,758.4 611.7,759.6 610.9,761.9 610.0,764.8 609.2,769.4 608.4,772.8 607.6,774.4 606.8,771.8 606.0,768.8 605.1,764.2 604.3,762.1 603.5,759.7"/><polygon points="613.0,757.1 613.9,755.3 614.8,754.9 615.6,754.7 616.5,754.7 617.4,754.7 618.2,754.9 619.1,755.3 620.0,757.1 620.0,758.3 619.1,760.1 618.2,760.5 617.4,760.7 616.5,760.7 615.6,760.7 614.8,760.5 613.9,760.1 613.0,758.3"/><polygon points="621.0,757.1 621.9,755.7 622.7,755.3 623.6,755.2 624.4,755.2 625.3,755.3 626.1,755.7 627.0,757.1 627.0,758.3 626.1,759.7 625.3,760.1 624.4,760.2 623.6,760.2 622.7,760.1 621.9,759.7 621.0,758.3"/><polygon points="628.0,757.1 628.9,755.2 629.7,754.8 630.6,754.7 631.4,754.7 632.3,754.8 633.1,755.2 634.0,757.1 634.0,758.3 633.1,760.2 632.3,760.6 631.4,760.7 630.6,760.7 629.7,760.6 628.9,760.2 628.0,758.3"/><polygon points="635.0,757.1 635.8,753.5 636.6,752.3 637.4,751.2 638.2,751.3 639.0,749.2 639.9,749.5 640.7,749.1 641.5,749.1 642.3,749.0 643.1,749.4 643.9,750.7 644.7,748.7 645.5,748.8 646.3,749.4 647.1,749.5 648.0,749.6 648.8,751.3 649.6,750.4 650.4,752.1 651.2,753.4 652.0,757.1 652.0,758.3 651.2,762.0 650.4,763.3 649.6,765.0 648.8,764.1 648.0,765.8 647.1,765.9 646.3,766.0 645.5,766.6 644.7,766.7 643.9,764.7 643.1,766.0 642.3,766.4 641.5,766.3 640.7,766.3 639.9,765.9 639.0,766.2 638.2,764.1 637.4,764.2 636.6,763.1 635.8,761.9 635.0,758.3"/><polygon points="653.0,756.5 653.9,754.5 654.7,750.2 655.6,747.2 656.4,749.8 657.3,753.4 658.1,756.0 659.0,757.1 659.0,758.3 658.1,759.4 657.3,762.0 656.4,765.6 655.6,768.2 654.7,765.2 653.9,760.9 653.0,758.9"/><polygon points="659.0,757.1 659.9,751.7 660.8,750.4 661.6,751.3 662.5,751.1 663.4,750.9 664.2,750.2 665.1,752.3 666.0,757.1 666.0,758.3 665.1,763.1 664.2,765.2 663.4,764.5 662.5,764.3 661.6,764.1 660.8,765.0 659.9,763.7 659.0,758.3"/><polygon points="672.0,757.1 672.8,755.7 673.6,755.1 674.4,754.4 675.2,754.1 676.1,753.9 676.9,754.2 677.7,753.8 678.5,753.7 679.3,753.6 680.1,754.0 680.9,753.1 681.8,753.9 682.6,753.0 683.4,753.0 684.2,754.2 685.0,753.6 685.8,753.2 686.6,753.0 687.4,753.6 688.2,753.9 689.1,754.1 689.9,753.4 690.7,754.4 691.5,754.2 692.3,754.9 693.1,754.9 693.9,755.1 694.8,757.1 694.8,758.3 693.9,760.3 693.1,760.5 692.3,760.5 691.5,761.2 690.7,761.0 689.9,762.0 689.1,761.3 688.2,761.5 687.4,761.8 686.6,762.4 685.8,762.2 685.0,761.8 684.2,761.2 683.4,762.4 682.6,762.4 681.8,761.5 680.9,762.3 680.1,761.4 679.3,761.8 678.5,761.7 677.7,761.6 676.9,761.2 676.1,761.5 675.2,761.3 674.4,761.0 673.6,760.3 672.8,759.7 672.0,758.3"/><polygon points="710.5,757.1 711.3,750.1 712.1,747.4 713.0,746.7 713.8,747.5 714.6,744.5 715.4,745.8 716.3,747.5 717.1,747.5 717.9,745.8 718.7,745.9 719.6,746.5 720.4,747.2 721.2,747.1 722.0,747.9 722.9,747.5 723.7,751.3 724.5,757.1 724.5,758.3 723.7,764.1 722.9,767.9 722.0,767.5 721.2,768.3 720.4,768.2 719.6,768.9 718.7,769.5 717.9,769.6 717.1,767.9 716.3,767.9 715.4,769.6 714.6,770.9 713.8,767.9 713.0,768.7 712.1,768.0 711.3,765.3 710.5,758.3"/><polygon points="726.0,755.7 726.8,754.6 727.7,750.9 728.5,748.1 729.4,744.3 730.2,744.5 731.1,743.6 731.9,744.6 732.8,744.9 733.6,749.4 734.5,752.7 735.3,754.8 736.2,756.3 737.0,757.1 737.0,758.3 736.2,759.1 735.3,760.6 734.5,762.7 733.6,766.0 732.8,770.5 731.9,770.8 731.1,771.8 730.2,770.9 729.4,771.1 728.5,767.3 727.7,764.5 726.8,760.8 726.0,759.7"/><polygon points="735.0,757.1 735.8,752.7 736.7,752.5 737.5,750.6 738.3,751.4 739.2,751.1 740.0,750.3 740.8,751.0 741.7,750.6 742.5,749.3 743.3,749.5 744.2,749.6 745.0,750.0 745.8,749.7 746.7,750.0 747.5,751.3 748.3,751.7 749.2,753.8 750.0,757.1 750.0,758.3 749.2,761.6 748.3,763.7 747.5,764.1 746.7,765.4 745.8,765.7 745.0,765.4 744.2,765.8 743.3,765.9 742.5,766.1 741.7,764.8 740.8,764.4 740.0,765.1 739.2,764.3 738.3,764.0 737.5,764.8 736.7,762.9 735.8,762.7 735.0,758.3"/><polygon points="757.8,757.1 758.6,754.2 759.4,753.5 760.2,753.5 761.0,753.5 761.8,751.8 762.6,752.9 763.4,752.1 764.2,752.1 765.1,752.1 765.9,751.3 766.7,750.9 767.5,752.2 768.3,751.4 769.1,752.1 769.9,751.6 770.8,751.9 771.6,752.3 772.4,752.3 773.2,752.3 774.0,751.1 774.8,752.0 775.6,752.7 776.4,751.9 777.2,752.1 778.1,753.3 778.9,754.1 779.7,754.7 780.5,757.1 780.5,758.3 779.7,760.7 778.9,761.3 778.1,762.1 777.2,763.3 776.4,763.5 775.6,762.7 774.8,763.4 774.0,764.3 773.2,763.1 772.4,763.1 771.6,763.1 770.8,763.5 769.9,763.8 769.1,763.3 768.3,764.0 767.5,763.2 766.7,764.5 765.9,764.1 765.1,763.3 764.2,763.3 763.4,763.3 762.6,762.5 761.8,763.6 761.0,761.9 760.2,761.9 759.4,761.9 758.6,761.2 757.8,758.3"/><polygon points="784.0,757.1 784.8,754.4 785.6,753.5 786.4,753.0 787.2,752.1 788.0,751.5 788.8,751.8 789.7,752.3 790.5,752.3 791.3,752.2 792.1,752.8 792.9,753.3 793.7,754.4 794.5,757.1 794.5,758.3 793.7,761.0 792.9,762.1 792.1,762.6 791.3,763.2 790.5,763.1 789.7,763.1 788.8,763.6 788.0,763.9 787.2,763.3 786.4,762.4 785.6,761.9 784.8,761.0 784.0,758.3"/><polygon points="798.0,757.1 798.8,756.9 799.6,755.9 800.4,754.9 801.2,753.7 802.0,753.8 802.8,753.8 803.7,753.9 804.5,753.7 805.3,753.7 806.1,753.2 806.9,753.4 807.7,753.4 808.5,754.5 809.3,754.5 810.1,753.9 810.9,753.7 811.7,754.3 812.5,754.2 813.3,754.9 814.2,754.6 815.0,754.2 815.8,754.4 816.6,754.4 817.4,754.4 818.2,755.2 819.0,755.4 819.8,755.4 820.6,755.2 821.4,755.2 822.2,755.2 823.0,755.5 823.8,755.7 824.7,755.8 825.5,756.1 826.3,756.2 827.1,756.6 827.9,756.6 828.7,757.0 829.5,757.1 829.5,758.3 828.7,758.4 827.9,758.8 827.1,758.8 826.3,759.2 825.5,759.3 824.7,759.6 823.8,759.7 823.0,759.9 822.2,760.2 821.4,760.2 820.6,760.2 819.8,760.0 819.0,760.0 818.2,760.2 817.4,761.0 816.6,761.0 815.8,761.0 815.0,761.2 814.2,760.8 813.3,760.5 812.5,761.2 811.7,761.1 810.9,761.7 810.1,761.5 809.3,760.9 808.5,760.9 807.7,762.0 806.9,762.0 806.1,762.2 805.3,761.7 804.5,761.7 803.7,761.5 802.8,761.6 802.0,761.6 801.2,761.7 800.4,760.5 799.6,759.5 798.8,758.5 798.0,758.3"/><polygon points="850.5,756.7 851.4,755.7 852.3,754.3 853.1,752.3 854.0,750.2 854.9,750.1 855.8,752.5 856.7,754.3 857.5,755.6 858.4,756.8 859.3,757.1 859.3,758.3 858.4,758.6 857.5,759.8 856.7,761.1 855.8,762.9 854.9,765.3 854.0,765.2 853.1,763.1 852.3,761.1 851.4,759.7 850.5,758.7"/><polygon points="868.0,757.1 868.8,753.8 869.6,753.8 870.4,752.8 871.2,752.1 872.1,750.9 872.9,751.1 873.7,750.4 874.5,751.0 875.3,751.4 876.1,751.3 876.9,749.8 877.8,750.4 878.6,751.2 879.4,751.8 880.2,750.8 881.0,750.4 881.8,751.0 882.6,751.3 883.4,750.5 884.2,750.1 885.1,751.7 885.9,752.3 886.7,752.0 887.5,752.2 888.3,752.2 889.1,753.5 889.9,753.6 890.8,757.1 890.8,758.3 889.9,761.8 889.1,761.9 888.3,763.2 887.5,763.2 886.7,763.4 885.9,763.1 885.1,763.7 884.2,765.3 883.4,764.9 882.6,764.1 881.8,764.4 881.0,765.0 880.2,764.6 879.4,763.6 878.6,764.2 877.8,765.0 876.9,765.6 876.1,764.1 875.3,764.0 874.5,764.4 873.7,765.0 872.9,764.3 872.1,764.5 871.2,763.3 870.4,762.6 869.6,761.6 868.8,761.6 868.0,758.3"/><polygon points="899.5,757.1 900.3,753.6 901.1,751.4 901.9,751.9 902.7,750.3 903.5,751.1 904.3,750.8 905.1,749.3 905.9,750.1 906.7,748.2 907.5,749.2 908.3,749.8 909.1,749.7 909.9,749.2 910.7,748.5 911.5,747.8 912.3,749.9 913.1,749.2 913.9,749.7 914.7,747.7 915.5,749.9 916.3,750.2 917.1,750.1 917.9,749.2 918.7,748.0 919.5,748.2 920.3,748.8 921.1,748.4 921.9,748.8 922.7,750.6 923.5,751.2 924.3,750.1 925.1,751.1 925.9,753.0 926.7,753.0 927.5,757.1 927.5,758.3 926.7,762.4 925.9,762.4 925.1,764.3 924.3,765.3 923.5,764.2 922.7,764.8 921.9,766.6 921.1,767.0 920.3,766.6 919.5,767.2 918.7,767.4 917.9,766.2 917.1,765.3 916.3,765.2 915.5,765.5 914.7,767.7 913.9,765.7 913.1,766.2 912.3,765.5 911.5,767.6 910.7,766.9 909.9,766.2 909.1,765.7 908.3,765.6 907.5,766.2 906.7,767.2 905.9,765.3 905.1,766.1 904.3,764.6 903.5,764.3 902.7,765.1 901.9,763.5 901.1,764.0 900.3,761.8 899.5,758.3"/><polygon points="959.0,757.1 959.8,757.1 960.6,756.8 961.4,756.5 962.2,756.1 963.0,755.7 963.8,754.9 964.6,755.3 965.4,754.2 966.2,754.6 967.0,754.2 967.0,761.2 966.2,760.8 965.4,761.2 964.6,760.1 963.8,760.5 963.0,759.7 962.2,759.3 961.4,758.9 960.6,758.6 959.8,758.3 959.0,758.3"/><rect x="100" y="757.1" width="470" height="1.2"/></g></g><rect x="101.8" y="747.8" width="4.8" height="20.4" rx="2.4" fill="#c9c2ff" stroke="#7b68f5" stroke-width="1.4"/><rect x="563.7" y="747.8" width="4.8" height="20.4" rx="2.4" fill="#c9c2ff" stroke="#7b68f5" stroke-width="1.4"/><g fill="none" stroke="#a9a7b0" stroke-width="1.5" stroke-linecap="round" stroke-linejoin="round"><path d="M28.5 738.8 H40.5 M32.2 738.8 V737.4 Q32.2 736 33.6 736 H35.4 Q36.8 736 36.8 737.4 V738.8"/><path d="M29.8 738.8 L30.4 748.2 Q30.5 749.6 31.9 749.6 H37.1 Q38.5 749.6 38.6 748.2 L39.2 738.8"/><path d="M33 742 V746.4 M36 742 V746.4"/><path d="M28.2 772.2 H40.6"/><path d="M30.6 765.6 L34.4 770 L38.2 765.6 M30.6 779 L34.4 774.6 L38.2 779"/></g><rect x="13" y="757" width="42" height="1" fill="#3a3845"/><rect x="55" y="728" width="1" height="60" fill="#3a3845"/><g fill="none" stroke="#9a98a2" stroke-width="1.2" stroke-linecap="round" stroke-linejoin="round"><path d="M930.8 124.5 L933.2 116.5 L933.6 126 L936 117.5 L936.6 125 L938.4 120.5 L939.2 123.5 L940.2 121.8"/><path d="M942.6 118.2 V120.6 M941.4 119.2 L942.6 118 L943.8 119.2 M942.6 122.6 V125 M941.4 124 L942.6 125.2 L943.8 124"/><path d="M955.4 119.6 L958.5 116.4 L961.6 119.6 M955.4 122.6 L958.5 125.8 L961.6 122.6 M958.5 116.6 V125.6" stroke-width="1.3"/></g><path d="M865.6 707.3 L862.4 710.7 L865.6 714.1 M869.6 707.3 L872.8 710.7 L869.6 714.1 M862.8 710.7 H872.4" fill="none" stroke="#9a98a2" stroke-width="1.4" stroke-linecap="round" stroke-linejoin="round"/><circle cx="1132.5" cy="151.4" r="4.6" fill="#8e8c96"/><g fill="none" stroke="#a9a7b0" stroke-width="1.4" stroke-linecap="round" stroke-linejoin="round"><path d="M1150.3 144.6 H1157.7 M1151.5 144.6 V150.4 L1150.3 152.6 H1157.7 L1156.5 150.4 V144.6 M1154 152.6 V157.8"/></g><circle cx="1132.5" cy="187.9" r="4.6" fill="#8e8c96"/><g fill="none" stroke="#a9a7b0" stroke-width="1.4" stroke-linecap="round" stroke-linejoin="round"><path d="M1150.3 181.1 H1157.7 M1151.5 181.1 V186.9 L1150.3 189.1 H1157.7 L1156.5 186.9 V181.1 M1154 189.1 V194.3"/></g><circle cx="1132.5" cy="224.3" r="4.6" fill="#8e8c96"/><g fill="none" stroke="#a9a7b0" stroke-width="1.4" stroke-linecap="round" stroke-linejoin="round"><path d="M1150.3 217.5 H1157.7 M1151.5 217.5 V223.3 L1150.3 225.5 H1157.7 L1156.5 223.3 V217.5 M1154 225.5 V230.7"/></g><path d="M1150 312 L1156 318.6 L1162.2 312" fill="none" stroke="#a9a7b0" stroke-width="1.4" stroke-linecap="round" stroke-linejoin="round"/><circle cx="1153.6" cy="349.7" r="4.6" fill="#ffffff"/><circle cx="1166.8" cy="400.5" r="4.6" fill="#ffffff"/><path d="M1003.6 751.6 L1009 757.6 L1003.6 763.6" fill="none" stroke="#ffffff" stroke-width="1.5" stroke-linecap="round" stroke-linejoin="round"/></svg>
</body></html>
